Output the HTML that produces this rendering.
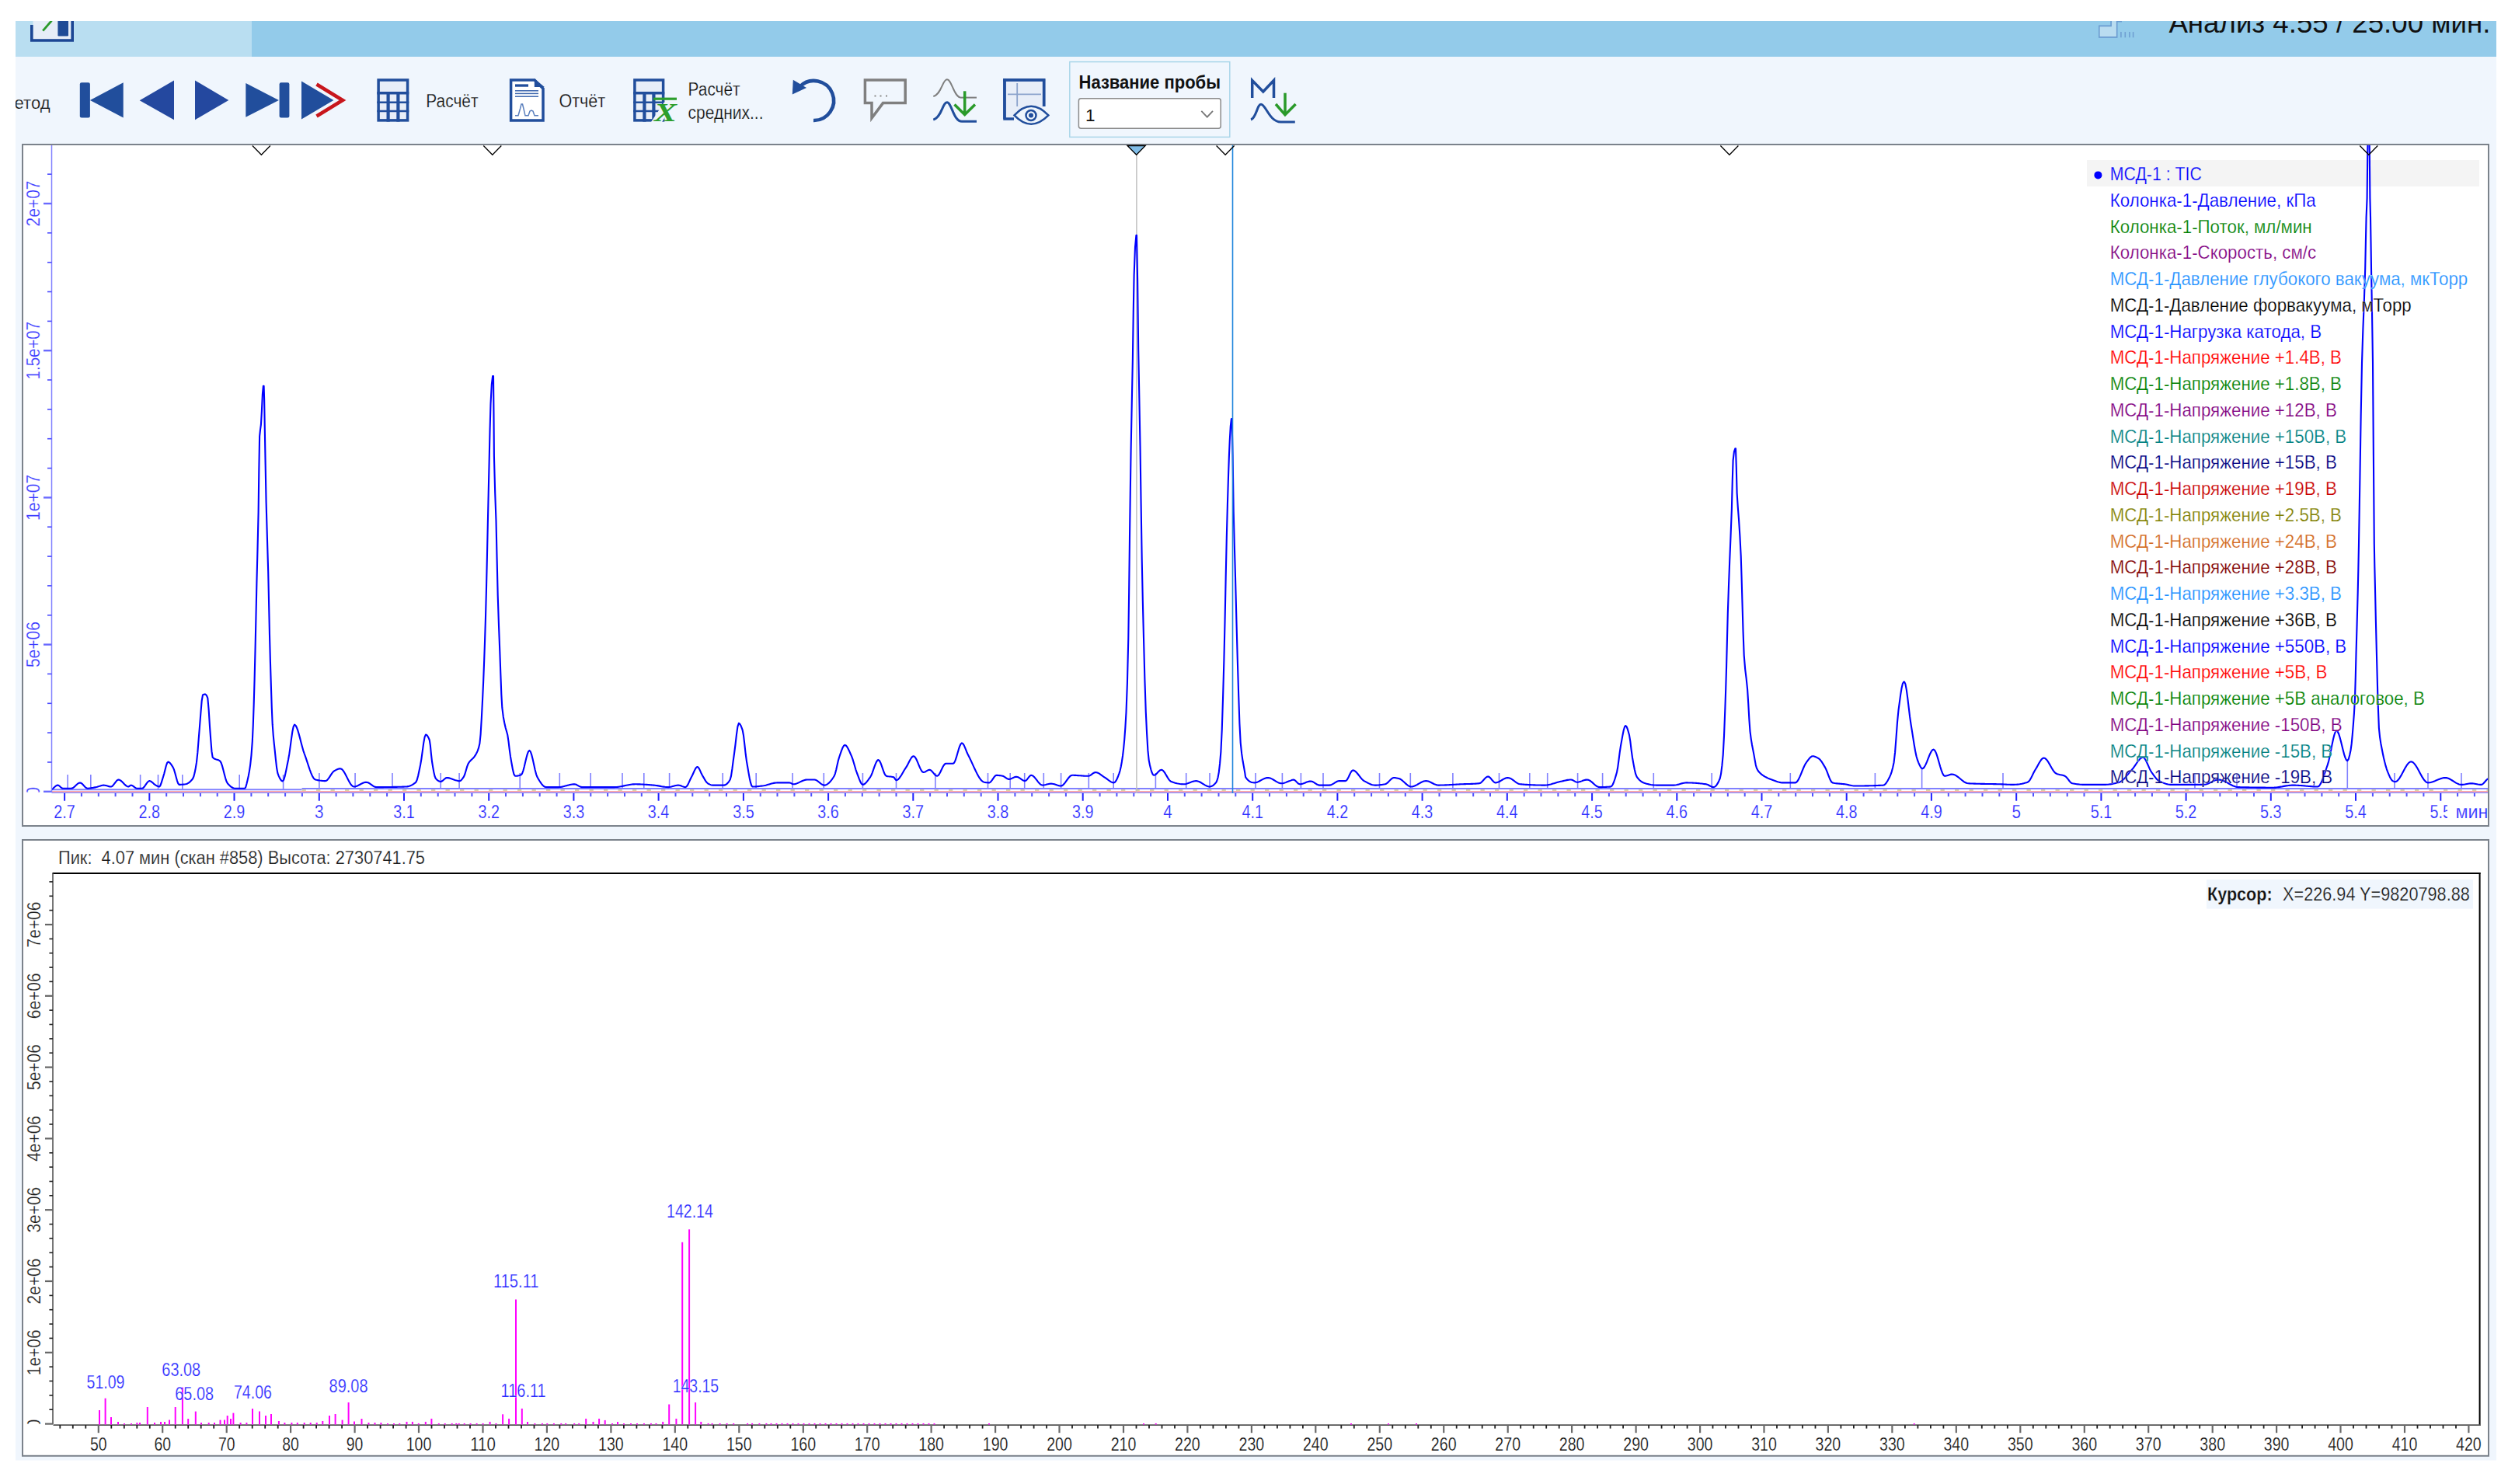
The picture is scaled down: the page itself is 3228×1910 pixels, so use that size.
<!DOCTYPE html><html><head><meta charset="utf-8"><style>html,body{margin:0;padding:0;background:#fff;overflow:hidden;width:3228px;height:1910px} svg{display:block} text{font-family:"Liberation Sans", sans-serif}</style></head><body>
<svg width="3228" height="1910" viewBox="0 0 3228 1910">
<defs><clipPath id="c1"><rect x="30" y="187" width="3172" height="875"/></clipPath><clipPath id="p1"><rect x="66" y="187" width="3136" height="834"/></clipPath><clipPath id="z1"><rect x="20" y="990" width="50" height="29.5"/></clipPath><clipPath id="z2"><rect x="20" y="1800" width="50" height="32.5"/></clipPath><clipPath id="tb"><rect x="20" y="27" width="3193" height="46"/></clipPath><clipPath id="tl"><rect x="20" y="73" width="200" height="113"/></clipPath></defs>
<rect x="0.0" y="0.0" width="3228.0" height="1910.0" fill="#ffffff"/>
<rect x="20.0" y="73.0" width="3193.0" height="1806.5" fill="#f0f6fd"/>
<rect x="20.0" y="27.0" width="3193.0" height="46.0" fill="#93cbea"/>
<rect x="20.0" y="27.0" width="304.0" height="46.0" fill="#b9def1"/>
<g clip-path="url(#tb)">
<rect x="42.5" y="20.0" width="49.0" height="30.5" fill="#e6edf7"/>
<path d="M40.8 32 V52 H93.2 V20" fill="none" stroke="#1c4694" stroke-width="3.6"/>
<path d="M74.4 20 H88 V45.3 Q88 46.5 86.8 46.5 H75.6 Q74.4 46.5 74.4 45.3 Z" fill="#1f4b96"/>
<line x1="55.2" y1="39.6" x2="66.5" y2="26.5" stroke="#2a9a2a" stroke-width="2.8"/>
<path d="M2701.8 33.4 H2717.1 V20 H2724.7 V47.9 H2701.8 Z" fill="#b9dcf0" stroke="#6a9bd0" stroke-width="1.6"/>
<line x1="2724.7" y1="27.6" x2="2731.0" y2="27.6" stroke="#6a9bd0" stroke-width="1.6"/>
<line x1="2729.9" y1="41.1" x2="2729.9" y2="48.3" stroke="#6f9fd2" stroke-width="1.6"/>
<line x1="2735.3" y1="41.1" x2="2735.3" y2="48.3" stroke="#6f9fd2" stroke-width="1.6"/>
<line x1="2740.9" y1="41.1" x2="2740.9" y2="48.3" stroke="#6f9fd2" stroke-width="1.6"/>
<line x1="2745.6" y1="41.1" x2="2745.6" y2="48.3" stroke="#6f9fd2" stroke-width="1.6"/>
<text x="2791.4" y="42.4" font-size="36.7" fill="#111" textLength="414.0" lengthAdjust="spacingAndGlyphs">Анализ 4.55 / 25.00 мин.</text>
</g>
<g clip-path="url(#tl)">
<text x="0.0" y="140.4" font-size="22" fill="#111" id="metod" stroke="#f0f6fd" stroke-width="0.25">Метод</text>
</g>
<rect x="102.8" y="106.3" width="13.1" height="45.1" rx="2.2" fill="#214e9c"/>
<path d="M115.9 129 L158.7 106.3 V151.4 Z" fill="#214e9c"/>
<path d="M179.7 129.3 L224 103.6 V154.2 Z" fill="#24489f"/>
<path d="M251 103.6 L294.3 129 L251 154.2 Z" fill="#24489f"/>
<path d="M316.3 106.9 L358.9 129 L316.3 150.7 Z" fill="#214e9c"/>
<rect x="359.6" y="106.3" width="12.8" height="45.1" rx="2.2" fill="#214e9c"/>
<path d="M388 104.4 L429.4 129 L388 153.4 Z" fill="#214e9c"/>
<path d="M407.5 108.5 L441 129 L407.5 149.5" fill="none" stroke="#c8161c" stroke-width="4.6"/>
<rect x="487.1" y="103.0" width="37.5" height="51.9" fill="#e8eef8" stroke="#214e9c" stroke-width="3.5"/>
<line x1="485.3" y1="119.8" x2="526.3" y2="119.8" stroke="#214e9c" stroke-width="3.5"/>
<line x1="485.3" y1="131.8" x2="526.3" y2="131.8" stroke="#214e9c" stroke-width="2.6"/>
<line x1="485.3" y1="143.0" x2="526.3" y2="143.0" stroke="#214e9c" stroke-width="2.6"/>
<line x1="499.6" y1="119.7" x2="499.6" y2="156.6" stroke="#214e9c" stroke-width="4.2"/>
<line x1="512.4" y1="119.7" x2="512.4" y2="156.6" stroke="#214e9c" stroke-width="4.2"/>
<text x="548.3" y="138.3" font-size="23" fill="#111" textLength="67.3" lengthAdjust="spacingAndGlyphs" stroke="#f0f6fd" stroke-width="0.25">Расчёт</text>
<path d="M657.6 103 H688 L699 114 V154.9 H657.6 Z" fill="#ffffff" stroke="#214e9c" stroke-width="3.5"/>
<path d="M687.8 101.2 V111.9 H700.8 Z" fill="#214e9c"/>
<rect x="663.0" y="108.4" width="17.0" height="3.3" fill="#214e9c"/>
<line x1="663.0" y1="116.8" x2="693.0" y2="116.8" stroke="#3d66ad" stroke-width="1.5"/>
<line x1="663.0" y1="120.4" x2="693.0" y2="120.4" stroke="#3d66ad" stroke-width="1.5"/>
<line x1="663.0" y1="124.2" x2="693.0" y2="124.2" stroke="#3d66ad" stroke-width="1.5"/>
<polyline points="663,148.8 667,148.8 669.5,140 671,134 672.5,134 674,140 676,148.8 680,148.8 682,143 684,142 686,143 688,148.8 693,148.8" fill="none" stroke="#5a7fbd" stroke-width="1.5"/>
<text x="719.4" y="138.3" font-size="23" fill="#111" textLength="59.8" lengthAdjust="spacingAndGlyphs" stroke="#f0f6fd" stroke-width="0.25">Отчёт</text>
<rect x="816.9" y="103.0" width="36.7" height="51.9" fill="#e8eef8" stroke="#214e9c" stroke-width="3.5"/>
<line x1="815.1" y1="119.8" x2="855.3" y2="119.8" stroke="#214e9c" stroke-width="3.5"/>
<line x1="815.1" y1="131.8" x2="855.3" y2="131.8" stroke="#214e9c" stroke-width="2.6"/>
<line x1="815.1" y1="143.0" x2="855.3" y2="143.0" stroke="#214e9c" stroke-width="2.6"/>
<line x1="829.4" y1="119.7" x2="829.4" y2="156.6" stroke="#214e9c" stroke-width="4.2"/>
<line x1="841.4" y1="119.7" x2="841.4" y2="156.6" stroke="#214e9c" stroke-width="4.2"/>
<path d="M838 157 L852 157 L868 131.5 L855 131.5 Z" fill="#eef5fc"/>
<rect x="841.0" y="125.6" width="30.0" height="3.2" fill="#2c9e2c"/>
<text x="856.5" y="156.2" font-size="33" style="font-family:'Liberation Serif';font-style:italic;font-weight:bold" fill="#2c9e2c" text-anchor="middle" textLength="29" lengthAdjust="spacingAndGlyphs">X</text>
<text x="885.6" y="123.1" font-size="23" fill="#111" textLength="67.0" lengthAdjust="spacingAndGlyphs" stroke="#f0f6fd" stroke-width="0.25">Расчёт</text>
<text x="885.6" y="152.5" font-size="23" fill="#111" textLength="96.9" lengthAdjust="spacingAndGlyphs" stroke="#f0f6fd" stroke-width="0.25">средних...</text>
<path d="M1029.5 111.5 A25.5 25.5 0 1 1 1047 155" fill="none" stroke="#214e9c" stroke-width="4.6"/>
<path d="M1020.8 102.8 L1019.8 121.4 L1038 113.1 Z" fill="#214e9c"/>
<path d="M1113.4 103 H1165.2 V132.6 H1136.5 L1122 152 V132.6 H1113.4 Z" fill="none" stroke="#7f7f7f" stroke-width="3.5" stroke-linejoin="miter"/>
<rect x="1125.5" y="122.5" width="2.0" height="2.0" fill="#8a8a8a"/>
<rect x="1132.5" y="122.5" width="2.0" height="2.0" fill="#8a8a8a"/>
<rect x="1140.0" y="122.5" width="2.0" height="2.0" fill="#8a8a8a"/>
<path d="M1201.3 124 C1212 121 1213 102.3 1218.9 102.3 C1225 102.3 1227 123 1236 125.6" fill="none" stroke="#7f7f7f" stroke-width="2"/>
<line x1="1236.0" y1="125.6" x2="1257.0" y2="125.6" stroke="#7f7f7f" stroke-width="2"/>
<path d="M1201.3 154.1 C1212 151 1213 131.8 1218.9 131.8 C1225 131.8 1227 156.2 1238 156.2 H1257" fill="none" stroke="#214e9c" stroke-width="3"/>
<line x1="1241.7" y1="117.3" x2="1241.7" y2="147.0" stroke="#2a9a2a" stroke-width="3.5"/>
<path d="M1228.5 134.5 L1241.7 147.5 L1255 134.5" fill="none" stroke="#2a9a2a" stroke-width="3.5"/>
<path d="M1293 153.1 V103 H1343.6 V137" fill="#e8eef8" stroke="#214e9c" stroke-width="3.5"/>
<rect x="1294.8" y="104.8" width="47.0" height="48.0" fill="#e8eef8"/>
<path d="M1293 101.3 V153.1 H1305" fill="none" stroke="#214e9c" stroke-width="3.5"/>
<path d="M1291.2 103 H1345.4 M1343.6 101.3 V137" fill="none" stroke="#214e9c" stroke-width="3.5"/>
<line x1="1297.0" y1="121.3" x2="1340.0" y2="121.3" stroke="#8ba3cc" stroke-width="1.8"/>
<line x1="1309.2" y1="107.0" x2="1309.2" y2="137.0" stroke="#8ba3cc" stroke-width="1.8"/>
<path d="M1305.5 148.4 Q1327 125 1349.4 148.4 Q1327 171 1305.5 148.4 Z" fill="#eef5fc" stroke="#214e9c" stroke-width="2.5"/>
<circle cx="1327" cy="148.4" r="6.5" fill="none" stroke="#214e9c" stroke-width="2.5"/>
<circle cx="1327" cy="148.4" r="3" fill="#214e9c"/>
<rect x="1376.8" y="79.6" width="206.0" height="96.8" fill="none" stroke="#a6d4e8" stroke-width="1.4"/>
<text x="1388.5" y="114.1" font-size="23" fill="#111" font-weight="bold" textLength="182.5" lengthAdjust="spacingAndGlyphs">Название пробы</text>
<rect x="1388.4" y="126.7" width="182.8" height="38.5" rx="3" fill="#ffffff" stroke="#8a8a8a" stroke-width="1.5"/>
<text x="1397.0" y="155.5" font-size="22.5" fill="#111">1</text>
<path d="M1546.3 142.8 L1553.7 150.6 L1561 142.8" fill="none" stroke="#777" stroke-width="1.8"/>
<path d="M1611.7 126 V103.5 L1625.8 118 L1639.5 103.5 V126" fill="none" stroke="#214e9c" stroke-width="3.5" stroke-linejoin="miter"/>
<path d="M1610 154 C1617 152 1618 134.3 1623 134.3 C1629 134.3 1634 157.1 1648.4 157.1 H1666.8" fill="none" stroke="#214e9c" stroke-width="3"/>
<line x1="1654.0" y1="119.7" x2="1654.0" y2="147.5" stroke="#2a9a2a" stroke-width="3.5"/>
<path d="M1642 134 L1654 147.8 L1667.6 134" fill="none" stroke="#2a9a2a" stroke-width="3.5"/>
<rect x="29.0" y="186.0" width="3174.0" height="877.0" fill="#ffffff" stroke="#7b828b" stroke-width="2"/>
<rect x="2686.0" y="206.0" width="505.0" height="34.0" fill="#f4f4f4"/>
<g clip-path="url(#p1)">
<line x1="66.5" y1="1016.2" x2="388.5" y2="1016.2" stroke="#8080ff" stroke-width="2"/>
<line x1="388.5" y1="1014.9" x2="3202.0" y2="1014.9" stroke="#8080ff" stroke-width="2"/>
<line x1="388.5" y1="1017.0" x2="3202" y2="1017.0" stroke="#d9d4a8" stroke-width="2" stroke-dasharray="5.3 13.2"/>
<line x1="66.5" y1="1018.9" x2="3202.0" y2="1018.9" stroke="#ffa4a4" stroke-width="1.6"/>
<line x1="66.5" y1="1020.8" x2="3202.0" y2="1020.8" stroke="#8080ff" stroke-width="2"/>
</g>
<g clip-path="url(#p1)">
<line x1="87.1" y1="997.0" x2="87.1" y2="1016.0" stroke="#8080ff" stroke-width="1.6"/>
<line x1="116.8" y1="997.0" x2="116.8" y2="1016.0" stroke="#8080ff" stroke-width="1.6"/>
<line x1="180.6" y1="997.0" x2="180.6" y2="1016.0" stroke="#8080ff" stroke-width="1.6"/>
<line x1="203.5" y1="997.0" x2="203.5" y2="1016.0" stroke="#8080ff" stroke-width="1.6"/>
<line x1="234.8" y1="997.0" x2="234.8" y2="1016.0" stroke="#8080ff" stroke-width="1.6"/>
<line x1="308.2" y1="997.0" x2="308.2" y2="1016.0" stroke="#8080ff" stroke-width="1.6"/>
<line x1="364.6" y1="997.0" x2="364.6" y2="1016.0" stroke="#8080ff" stroke-width="1.6"/>
<line x1="410.9" y1="995.0" x2="410.9" y2="1014.0" stroke="#8080ff" stroke-width="1.6"/>
<line x1="457.1" y1="995.0" x2="457.1" y2="1014.0" stroke="#8080ff" stroke-width="1.6"/>
<line x1="505.0" y1="995.0" x2="505.0" y2="1014.0" stroke="#8080ff" stroke-width="1.6"/>
<line x1="567.2" y1="995.0" x2="567.2" y2="1014.0" stroke="#8080ff" stroke-width="1.6"/>
<line x1="591.1" y1="995.0" x2="591.1" y2="1014.0" stroke="#8080ff" stroke-width="1.6"/>
<line x1="669.2" y1="995.0" x2="669.2" y2="1014.0" stroke="#8080ff" stroke-width="1.6"/>
<line x1="720.3" y1="995.0" x2="720.3" y2="1014.0" stroke="#8080ff" stroke-width="1.6"/>
<line x1="760.2" y1="995.0" x2="760.2" y2="1014.0" stroke="#8080ff" stroke-width="1.6"/>
<line x1="801.0" y1="995.0" x2="801.0" y2="1014.0" stroke="#8080ff" stroke-width="1.6"/>
<line x1="828.8" y1="995.0" x2="828.8" y2="1014.0" stroke="#8080ff" stroke-width="1.6"/>
<line x1="861.6" y1="995.0" x2="861.6" y2="1014.0" stroke="#8080ff" stroke-width="1.6"/>
<line x1="930.2" y1="995.0" x2="930.2" y2="1014.0" stroke="#8080ff" stroke-width="1.6"/>
<line x1="973.2" y1="995.0" x2="973.2" y2="1014.0" stroke="#8080ff" stroke-width="1.6"/>
<line x1="1020.1" y1="995.0" x2="1020.1" y2="1014.0" stroke="#8080ff" stroke-width="1.6"/>
<line x1="1060.3" y1="995.0" x2="1060.3" y2="1014.0" stroke="#8080ff" stroke-width="1.6"/>
<line x1="1110.4" y1="995.0" x2="1110.4" y2="1014.0" stroke="#8080ff" stroke-width="1.6"/>
<line x1="1153.5" y1="995.0" x2="1153.5" y2="1014.0" stroke="#8080ff" stroke-width="1.6"/>
<line x1="1203.9" y1="995.0" x2="1203.9" y2="1014.0" stroke="#8080ff" stroke-width="1.6"/>
<line x1="1271.5" y1="995.0" x2="1271.5" y2="1014.0" stroke="#8080ff" stroke-width="1.6"/>
<line x1="1300.2" y1="995.0" x2="1300.2" y2="1014.0" stroke="#8080ff" stroke-width="1.6"/>
<line x1="1318.7" y1="995.0" x2="1318.7" y2="1014.0" stroke="#8080ff" stroke-width="1.6"/>
<line x1="1343.3" y1="995.0" x2="1343.3" y2="1014.0" stroke="#8080ff" stroke-width="1.6"/>
<line x1="1365.6" y1="995.0" x2="1365.6" y2="1014.0" stroke="#8080ff" stroke-width="1.6"/>
<line x1="1401.3" y1="995.0" x2="1401.3" y2="1014.0" stroke="#8080ff" stroke-width="1.6"/>
<line x1="1433.2" y1="995.0" x2="1433.2" y2="1014.0" stroke="#8080ff" stroke-width="1.6"/>
<line x1="1487.4" y1="995.0" x2="1487.4" y2="1014.0" stroke="#8080ff" stroke-width="1.6"/>
<line x1="1526.7" y1="995.0" x2="1526.7" y2="1014.0" stroke="#8080ff" stroke-width="1.6"/>
<line x1="1557.0" y1="995.0" x2="1557.0" y2="1014.0" stroke="#8080ff" stroke-width="1.6"/>
<line x1="1616.0" y1="995.0" x2="1616.0" y2="1014.0" stroke="#8080ff" stroke-width="1.6"/>
<line x1="1650.4" y1="995.0" x2="1650.4" y2="1014.0" stroke="#8080ff" stroke-width="1.6"/>
<line x1="1674.4" y1="995.0" x2="1674.4" y2="1014.0" stroke="#8080ff" stroke-width="1.6"/>
<line x1="1703.0" y1="995.0" x2="1703.0" y2="1014.0" stroke="#8080ff" stroke-width="1.6"/>
<line x1="1775.5" y1="995.0" x2="1775.5" y2="1014.0" stroke="#8080ff" stroke-width="1.6"/>
<line x1="1815.3" y1="995.0" x2="1815.3" y2="1014.0" stroke="#8080ff" stroke-width="1.6"/>
<line x1="1869.9" y1="995.0" x2="1869.9" y2="1014.0" stroke="#8080ff" stroke-width="1.6"/>
<line x1="1929.5" y1="995.0" x2="1929.5" y2="1014.0" stroke="#8080ff" stroke-width="1.6"/>
<line x1="1968.8" y1="995.0" x2="1968.8" y2="1014.0" stroke="#8080ff" stroke-width="1.6"/>
<line x1="1991.7" y1="995.0" x2="1991.7" y2="1014.0" stroke="#8080ff" stroke-width="1.6"/>
<line x1="2030.6" y1="995.0" x2="2030.6" y2="1014.0" stroke="#8080ff" stroke-width="1.6"/>
<line x1="2062.6" y1="995.0" x2="2062.6" y2="1014.0" stroke="#8080ff" stroke-width="1.6"/>
<line x1="2128.3" y1="995.0" x2="2128.3" y2="1014.0" stroke="#8080ff" stroke-width="1.6"/>
<line x1="2203.2" y1="995.0" x2="2203.2" y2="1014.0" stroke="#8080ff" stroke-width="1.6"/>
<line x1="2304.3" y1="995.0" x2="2304.3" y2="1014.0" stroke="#8080ff" stroke-width="1.6"/>
<line x1="2413.4" y1="995.0" x2="2413.4" y2="1014.0" stroke="#8080ff" stroke-width="1.6"/>
<line x1="2473.6" y1="988.0" x2="2473.6" y2="1014.0" stroke="#8080ff" stroke-width="1.6"/>
<line x1="2578.0" y1="995.0" x2="2578.0" y2="1014.0" stroke="#8080ff" stroke-width="1.6"/>
<line x1="2825.0" y1="995.0" x2="2825.0" y2="1014.0" stroke="#8080ff" stroke-width="1.6"/>
<line x1="2879.0" y1="995.0" x2="2879.0" y2="1014.0" stroke="#8080ff" stroke-width="1.6"/>
<line x1="3021.3" y1="979.2" x2="3021.3" y2="1014.0" stroke="#8080ff" stroke-width="1.6"/>
<line x1="3082.0" y1="995.0" x2="3082.0" y2="1014.0" stroke="#8080ff" stroke-width="1.6"/>
<line x1="3125.0" y1="995.0" x2="3125.0" y2="1014.0" stroke="#8080ff" stroke-width="1.6"/>
<line x1="3168.0" y1="995.0" x2="3168.0" y2="1014.0" stroke="#8080ff" stroke-width="1.6"/>
<line x1="1462.9" y1="199.0" x2="1462.9" y2="1021.0" stroke="#c0c0c0" stroke-width="1.5"/>
<polyline points="66.50,1016.30 67.82,1015.22 69.13,1013.98 70.45,1012.74 71.77,1011.66 73.08,1010.89 74.40,1010.60 75.66,1011.03 76.92,1012.04 78.18,1013.26 79.44,1014.27 80.70,1014.70 82.10,1014.70 83.50,1014.70 84.90,1014.70 86.30,1014.70 87.70,1014.70 89.10,1014.70 90.50,1014.70 91.90,1014.70 93.29,1014.39 94.68,1013.56 96.06,1012.39 97.45,1011.05 98.84,1009.71 100.22,1008.54 101.61,1007.71 103.00,1007.40 104.37,1007.80 105.74,1008.85 107.11,1010.27 108.49,1011.83 109.86,1013.25 111.23,1014.30 112.60,1014.70 114.00,1014.66 115.40,1014.55 116.80,1014.38 118.20,1014.16 119.60,1013.91 121.00,1013.64 122.40,1013.37 123.80,1013.10 125.17,1012.77 126.54,1012.34 127.91,1011.87 129.29,1011.40 130.66,1010.99 132.03,1010.71 133.40,1010.60 134.76,1010.71 136.11,1010.98 137.47,1011.35 138.83,1011.75 140.19,1012.12 141.54,1012.39 142.90,1012.50 144.27,1012.00 145.64,1010.72 147.01,1008.96 148.39,1007.04 149.76,1005.28 151.13,1004.00 152.50,1003.50 153.92,1003.81 155.34,1004.64 156.77,1005.83 158.19,1007.25 159.61,1008.75 161.03,1010.17 162.46,1011.36 163.88,1012.19 165.30,1012.50 166.37,1012.01 167.43,1011.09 168.50,1010.60 169.82,1010.90 171.13,1011.66 172.45,1012.65 173.77,1013.64 175.08,1014.40 176.40,1014.70 177.68,1014.70 178.96,1014.70 180.24,1014.70 181.52,1014.70 182.80,1014.70 184.17,1014.17 185.54,1012.80 186.91,1010.92 188.29,1008.88 189.66,1007.00 191.03,1005.63 192.40,1005.10 193.73,1005.42 195.07,1006.23 196.40,1007.35 197.73,1008.58 199.07,1009.73 200.40,1010.60 201.57,1011.23 202.75,1011.84 203.93,1012.31 205.10,1012.50 206.32,1011.19 207.55,1007.95 208.78,1003.87 210.00,1000.00 211.26,995.74 212.52,990.65 213.78,985.75 215.04,982.06 216.30,980.60 217.58,981.01 218.86,982.11 220.14,983.71 221.42,985.61 222.70,987.60 224.03,990.68 225.37,995.21 226.70,1000.30 228.03,1005.03 229.37,1008.53 230.70,1009.90 232.02,1009.88 233.33,1009.82 234.65,1009.73 235.97,1009.61 237.28,1009.47 238.60,1009.30 239.97,1009.00 241.34,1008.45 242.71,1007.66 244.09,1006.62 245.46,1005.34 246.83,1003.80 248.20,1002.00 249.40,999.24 250.60,994.59 251.80,988.45 253.00,981.20 254.33,968.64 255.67,951.49 257.00,935.00 258.33,918.24 259.67,902.06 261.00,894.40 262.00,893.92 263.00,893.61 264.00,893.50 265.10,894.08 266.20,895.74 267.30,898.30 268.65,913.48 270.00,935.00 271.23,951.64 272.47,967.19 273.70,974.80 275.07,976.03 276.44,976.82 277.81,977.31 279.19,977.67 280.56,978.07 281.93,978.66 283.30,979.60 284.67,981.87 286.04,985.87 287.41,990.94 288.79,996.39 290.16,1001.55 291.53,1005.75 292.90,1008.30 294.26,1009.75 295.61,1011.09 296.97,1012.28 298.33,1013.28 299.69,1014.04 301.04,1014.53 302.40,1014.70 303.82,1014.70 305.24,1014.70 306.67,1014.70 308.09,1014.70 309.51,1014.70 310.93,1014.70 312.36,1014.70 313.78,1014.70 315.20,1014.70 316.30,1013.00 317.40,1009.01 318.50,1004.40 319.73,999.04 320.97,992.43 322.20,984.10 323.50,972.01 324.80,954.40 325.75,933.77 326.70,906.30 327.60,874.50 328.50,837.70 329.45,794.60 330.40,750.60 331.50,707.37 332.60,659.80 333.35,603.82 334.10,561.50 335.00,553.14 335.90,546.70 336.90,528.98 337.90,507.28 338.90,496.70 339.25,496.70 339.60,496.70 340.15,515.03 340.70,546.70 341.65,598.31 342.60,646.80 343.90,692.10 345.20,735.70 346.10,776.43 347.00,817.30 347.95,852.85 348.90,884.00 349.80,911.26 350.70,932.20 351.70,946.02 352.70,956.40 353.70,965.60 354.93,977.63 356.17,988.54 357.40,995.20 358.68,998.58 359.96,1001.39 361.24,1003.55 362.52,1004.92 363.80,1005.40 365.24,1003.60 366.68,998.89 368.12,992.35 369.56,985.03 371.00,978.00 372.33,970.44 373.67,960.88 375.00,950.81 376.33,941.76 377.67,935.22 379.00,932.70 380.41,933.62 381.82,936.13 383.23,939.91 384.64,944.61 386.06,949.89 387.47,955.41 388.88,960.83 390.29,965.81 391.70,970.00 393.13,973.93 394.56,978.16 395.99,982.52 397.42,986.85 398.85,991.00 400.28,994.82 401.71,998.13 403.14,1000.79 404.57,1002.63 406.00,1003.50 407.43,1003.82 408.87,1004.10 410.30,1004.36 411.73,1004.58 413.17,1004.76 414.60,1004.91 416.03,1005.01 417.47,1005.08 418.90,1005.10 420.29,1004.64 421.67,1003.42 423.06,1001.65 424.45,999.55 425.84,997.36 427.23,995.29 428.61,993.56 430.00,992.40 431.33,991.63 432.67,990.89 434.00,990.22 435.33,989.69 436.67,989.33 438.00,989.20 439.46,989.66 440.92,990.93 442.38,992.84 443.83,995.24 445.29,997.96 446.75,1000.85 448.21,1003.74 449.67,1006.46 451.12,1008.86 452.58,1010.77 454.04,1012.04 455.50,1012.50 456.95,1012.36 458.41,1011.99 459.86,1011.44 461.32,1010.76 462.77,1009.99 464.23,1009.21 465.68,1008.44 467.14,1007.76 468.59,1007.21 470.05,1006.84 471.50,1006.70 472.91,1006.92 474.32,1007.51 475.73,1008.36 477.14,1009.37 478.56,1010.43 479.97,1011.44 481.38,1012.29 482.79,1012.88 484.20,1013.10 485.67,1013.10 487.15,1013.10 488.62,1013.09 490.09,1013.09 491.57,1013.08 493.04,1013.08 494.51,1013.07 495.98,1013.05 497.46,1013.04 498.93,1013.03 500.40,1013.01 501.88,1012.99 503.35,1012.97 504.82,1012.95 506.30,1012.92 507.77,1012.90 509.24,1012.87 510.72,1012.84 512.19,1012.80 513.66,1012.77 515.13,1012.73 516.61,1012.69 518.08,1012.65 519.55,1012.60 521.03,1012.55 522.50,1012.50 523.92,1012.39 525.34,1012.15 526.77,1011.78 528.19,1011.28 529.61,1010.65 531.03,1009.88 532.46,1008.96 533.88,1007.91 535.30,1006.70 536.72,1003.79 538.15,998.43 539.58,991.77 541.00,985.00 542.40,976.85 543.80,966.54 545.20,956.37 546.60,948.60 548.00,945.50 549.20,946.00 550.40,947.43 551.60,949.64 552.80,952.50 553.87,959.42 554.93,970.60 556.00,980.00 557.20,987.30 558.40,993.98 559.60,999.17 560.80,1002.00 562.08,1003.35 563.36,1004.46 564.64,1005.29 565.92,1005.82 567.20,1006.00 568.53,1005.63 569.87,1004.70 571.20,1003.50 572.53,1002.30 573.87,1001.37 575.20,1001.00 576.59,1001.10 577.98,1001.38 579.36,1001.79 580.75,1002.29 582.14,1002.82 583.52,1003.35 584.91,1003.82 586.30,1004.20 587.60,1004.52 588.90,1004.85 590.20,1005.10 591.50,1005.20 592.88,1004.72 594.25,1003.44 595.62,1001.65 597.00,999.60 598.40,996.28 599.80,991.48 601.20,986.59 602.60,983.00 603.93,980.94 605.26,979.34 606.59,978.01 607.91,976.78 609.24,975.47 610.57,973.90 611.90,971.90 613.27,969.49 614.65,966.60 616.02,962.63 617.40,957.00 618.63,944.78 619.87,923.79 621.10,899.60 622.10,877.91 623.10,852.28 624.10,823.70 625.00,794.44 625.90,760.90 626.85,719.52 627.80,675.60 628.70,635.23 629.60,596.00 630.55,553.02 631.50,520.00 632.80,495.21 634.10,484.10 634.55,484.10 635.00,484.10 635.45,529.21 635.90,586.70 637.20,634.16 638.50,670.00 639.60,718.97 640.70,766.30 642.00,805.12 643.30,838.50 644.30,866.51 645.30,893.34 646.30,910.70 647.77,922.44 649.23,930.31 650.70,936.70 652.00,941.28 653.30,946.10 654.53,954.36 655.77,964.82 657.00,973.70 658.48,982.21 659.95,990.33 661.42,996.41 662.90,998.80 664.22,998.75 665.53,998.60 666.85,998.36 668.17,998.04 669.48,997.65 670.80,997.20 672.12,995.49 673.45,991.77 674.77,986.73 676.10,981.07 677.42,975.46 678.75,970.61 680.07,967.19 681.40,965.90 682.86,967.50 684.31,971.70 685.77,977.60 687.23,984.30 688.69,990.92 690.14,996.55 691.60,1000.30 693.00,1002.69 694.40,1005.01 695.80,1007.17 697.20,1009.11 698.60,1010.74 700.00,1012.00 701.40,1012.81 702.80,1013.10 704.25,1013.10 705.69,1013.10 707.14,1013.10 708.58,1013.10 710.03,1013.10 711.47,1013.10 712.92,1013.10 714.36,1013.10 715.81,1013.10 717.25,1013.10 718.70,1013.10 720.18,1013.04 721.66,1012.89 723.14,1012.65 724.61,1012.35 726.09,1011.99 727.57,1011.60 729.05,1011.20 730.53,1010.80 732.01,1010.41 733.49,1010.05 734.96,1009.75 736.44,1009.51 737.92,1009.36 739.40,1009.30 740.77,1009.51 742.14,1010.05 743.51,1010.80 744.89,1011.60 746.26,1012.35 747.63,1012.89 749.00,1013.10 750.48,1013.10 751.96,1013.10 753.45,1013.10 754.93,1013.10 756.41,1013.10 757.89,1013.10 759.38,1013.10 760.86,1013.10 762.34,1013.10 763.82,1013.10 765.30,1013.10 766.79,1013.10 768.27,1013.10 769.75,1013.10 771.23,1013.10 772.71,1013.10 774.20,1013.10 775.68,1013.10 777.16,1013.10 778.64,1013.10 780.12,1013.10 781.61,1013.10 783.09,1013.10 784.57,1013.10 786.05,1013.10 787.54,1013.10 789.02,1013.10 790.50,1013.10 791.93,1013.07 793.35,1012.98 794.78,1012.85 796.21,1012.67 797.63,1012.45 799.06,1012.20 800.48,1011.93 801.91,1011.65 803.34,1011.35 804.76,1011.05 806.19,1010.75 807.62,1010.47 809.04,1010.20 810.47,1009.95 811.89,1009.73 813.32,1009.55 814.75,1009.42 816.17,1009.33 817.60,1009.30 819.09,1009.31 820.59,1009.33 822.08,1009.37 823.58,1009.41 825.07,1009.47 826.56,1009.55 828.06,1009.63 829.55,1009.71 831.04,1009.81 832.54,1009.91 834.03,1010.02 835.52,1010.13 837.02,1010.25 838.51,1010.36 840.01,1010.48 841.50,1010.60 842.92,1010.74 844.35,1010.92 845.77,1011.14 847.19,1011.38 848.62,1011.64 850.04,1011.90 851.46,1012.16 852.88,1012.41 854.31,1012.63 855.73,1012.82 857.15,1012.97 858.58,1013.07 860.00,1013.10 861.42,1013.01 862.84,1012.78 864.27,1012.45 865.69,1012.06 867.11,1011.64 868.53,1011.25 869.96,1010.92 871.38,1010.69 872.80,1010.60 874.16,1010.74 875.51,1011.10 876.87,1011.58 878.23,1012.12 879.59,1012.60 880.94,1012.96 882.30,1013.10 883.58,1012.43 884.87,1010.68 886.15,1008.19 887.43,1005.34 888.72,1002.49 890.00,1000.00 891.27,997.54 892.53,994.71 893.80,991.88 895.07,989.41 896.33,987.66 897.60,987.00 898.88,987.82 900.16,989.90 901.44,992.67 902.72,995.56 904.00,998.00 905.40,1000.37 906.80,1002.84 908.20,1005.16 909.60,1007.07 911.00,1008.30 912.28,1009.01 913.56,1009.64 914.84,1010.14 916.12,1010.48 917.40,1010.60 918.84,1010.60 920.28,1010.60 921.72,1010.60 923.16,1010.60 924.60,1010.60 926.04,1010.60 927.48,1010.60 928.92,1010.60 930.36,1010.60 931.80,1010.60 933.12,1010.38 934.43,1009.73 935.75,1008.68 937.07,1007.28 938.38,1005.54 939.70,1003.50 941.03,998.64 942.35,989.94 943.67,979.65 945.00,970.00 946.48,958.50 947.95,945.62 949.42,935.13 950.90,930.80 952.10,931.53 953.30,933.48 954.50,936.32 955.70,939.70 957.03,946.80 958.35,958.09 959.67,970.26 961.00,980.00 962.25,987.28 963.50,994.66 964.75,1001.51 966.00,1007.19 967.25,1011.07 968.50,1012.50 969.91,1012.48 971.32,1012.43 972.73,1012.35 974.14,1012.24 975.56,1012.11 976.97,1011.97 978.38,1011.82 979.79,1011.66 981.20,1011.50 982.67,1011.29 984.14,1011.00 985.61,1010.65 987.08,1010.26 988.55,1009.84 990.02,1009.40 991.48,1008.97 992.95,1008.56 994.42,1008.19 995.89,1007.87 997.36,1007.62 998.83,1007.46 1000.30,1007.40 1001.75,1007.40 1003.21,1007.40 1004.66,1007.40 1006.12,1007.40 1007.57,1007.40 1009.03,1007.40 1010.48,1007.40 1011.94,1007.40 1013.39,1007.40 1014.85,1007.40 1016.30,1007.40 1017.50,1007.70 1018.70,1008.35 1019.90,1009.00 1021.10,1009.30 1022.56,1009.19 1024.02,1008.87 1025.47,1008.39 1026.93,1007.80 1028.39,1007.12 1029.85,1006.40 1031.31,1005.68 1032.77,1005.00 1034.22,1004.41 1035.68,1003.93 1037.14,1003.61 1038.60,1003.50 1039.97,1003.50 1041.34,1003.50 1042.71,1003.50 1044.09,1003.50 1045.46,1003.50 1046.83,1003.50 1048.20,1003.50 1049.62,1003.74 1051.04,1004.40 1052.47,1005.34 1053.89,1006.46 1055.31,1007.64 1056.73,1008.76 1058.16,1009.70 1059.58,1010.36 1061.00,1010.60 1062.41,1010.42 1063.82,1009.89 1065.23,1009.05 1066.64,1007.91 1068.06,1006.51 1069.47,1004.87 1070.88,1003.02 1072.29,1000.99 1073.70,998.80 1074.96,995.60 1076.22,990.65 1077.48,984.93 1078.74,979.40 1080.00,975.00 1081.48,970.69 1082.96,966.37 1084.44,962.59 1085.92,959.92 1087.40,958.90 1088.83,959.52 1090.27,961.21 1091.70,963.69 1093.13,966.70 1094.57,969.96 1096.00,973.20 1097.40,976.88 1098.80,981.44 1100.20,986.33 1101.60,991.03 1103.00,995.00 1104.48,998.87 1105.96,1002.86 1107.44,1006.40 1108.92,1008.93 1110.40,1009.90 1111.77,1009.60 1113.14,1008.75 1114.51,1007.48 1115.89,1005.90 1117.26,1004.10 1118.63,1002.19 1120.00,1000.30 1121.31,997.98 1122.62,994.82 1123.94,991.16 1125.25,987.37 1126.56,983.81 1127.88,980.82 1129.19,978.76 1130.50,978.00 1131.96,979.10 1133.41,981.95 1134.87,985.88 1136.33,990.20 1137.79,994.25 1139.24,997.34 1140.70,998.80 1142.07,999.12 1143.44,999.32 1144.81,999.46 1146.19,999.57 1147.56,999.72 1148.93,999.94 1150.30,1000.30 1151.37,1001.46 1152.43,1003.26 1153.50,1004.20 1154.91,1003.83 1156.32,1002.79 1157.73,1001.21 1159.14,999.23 1160.56,996.96 1161.97,994.54 1163.38,992.09 1164.79,989.73 1166.20,987.60 1167.57,985.39 1168.94,982.78 1170.31,980.05 1171.69,977.46 1173.06,975.27 1174.43,973.76 1175.80,973.20 1177.21,973.91 1178.62,975.82 1180.03,978.59 1181.44,981.87 1182.86,985.33 1184.27,988.61 1185.68,991.38 1187.09,993.29 1188.50,994.00 1189.83,993.76 1191.17,993.17 1192.50,992.40 1193.83,991.63 1195.17,991.04 1196.50,990.80 1197.87,991.24 1199.24,992.39 1200.61,993.95 1201.99,995.65 1203.36,997.21 1204.73,998.36 1206.10,998.80 1207.50,998.11 1208.90,996.30 1210.30,993.74 1211.70,990.80 1213.10,987.86 1214.50,985.30 1215.90,983.49 1217.30,982.80 1218.66,982.80 1220.01,982.80 1221.37,982.80 1222.73,982.80 1224.09,982.80 1225.44,982.80 1226.80,982.80 1228.20,981.66 1229.60,978.66 1231.00,974.42 1232.40,969.55 1233.80,964.68 1235.20,960.44 1236.60,957.44 1238.00,956.30 1239.33,957.10 1240.67,959.19 1242.00,962.14 1243.33,965.48 1244.67,968.79 1246.00,971.60 1247.48,974.41 1248.96,977.42 1250.44,980.58 1251.91,983.82 1253.39,987.07 1254.87,990.28 1256.35,993.38 1257.83,996.31 1259.31,999.00 1260.79,1001.39 1262.26,1003.42 1263.74,1005.03 1265.22,1006.14 1266.70,1006.70 1267.98,1006.92 1269.26,1007.11 1270.54,1007.26 1271.82,1007.36 1273.10,1007.40 1274.46,1006.87 1275.81,1005.50 1277.17,1003.62 1278.53,1001.58 1279.89,999.70 1281.24,998.33 1282.60,997.80 1283.93,997.84 1285.27,997.94 1286.60,998.10 1287.93,998.30 1289.27,998.54 1290.60,998.80 1291.93,999.29 1293.27,1000.10 1294.60,1001.05 1295.93,1001.96 1297.27,1002.63 1298.60,1002.90 1299.97,1002.72 1301.34,1002.27 1302.71,1001.64 1304.09,1000.96 1305.46,1000.33 1306.83,999.88 1308.20,999.70 1309.59,999.93 1310.97,1000.54 1312.36,1001.41 1313.75,1002.40 1315.14,1003.39 1316.53,1004.26 1317.91,1004.87 1319.30,1005.10 1320.63,1004.56 1321.97,1003.21 1323.30,1001.45 1324.63,999.69 1325.97,998.34 1327.30,997.80 1328.74,998.16 1330.18,999.13 1331.62,1000.56 1333.06,1002.31 1334.50,1004.20 1335.94,1006.09 1337.38,1007.84 1338.82,1009.27 1340.26,1010.24 1341.70,1010.60 1343.09,1010.51 1344.47,1010.29 1345.86,1009.97 1347.25,1009.60 1348.64,1009.23 1350.03,1008.91 1351.41,1008.69 1352.80,1008.60 1354.22,1008.70 1355.64,1008.97 1357.07,1009.35 1358.49,1009.81 1359.91,1010.29 1361.33,1010.75 1362.76,1011.13 1364.18,1011.40 1365.60,1011.50 1367.04,1011.12 1368.48,1010.08 1369.92,1008.54 1371.36,1006.68 1372.80,1004.65 1374.24,1002.62 1375.68,1000.76 1377.12,999.22 1378.56,998.18 1380.00,997.80 1381.48,997.81 1382.96,997.86 1384.44,997.92 1385.91,998.00 1387.39,998.09 1388.87,998.19 1390.35,998.30 1391.83,998.41 1393.31,998.51 1394.79,998.60 1396.26,998.68 1397.74,998.74 1399.22,998.79 1400.70,998.80 1402.06,998.53 1403.41,997.85 1404.77,996.91 1406.13,995.89 1407.49,994.95 1408.84,994.27 1410.20,994.00 1411.60,994.18 1413.00,994.69 1414.40,995.43 1415.80,996.35 1417.20,997.37 1418.60,998.42 1420.00,999.42 1421.40,1000.30 1422.77,1001.16 1424.13,1002.14 1425.50,1003.18 1426.87,1004.22 1428.23,1005.21 1429.60,1006.08 1430.97,1006.77 1432.33,1007.23 1433.70,1007.40 1435.06,1006.74 1436.42,1004.93 1437.78,1002.26 1439.14,998.99 1440.50,995.40 1441.62,991.70 1442.75,986.69 1443.88,980.44 1445.00,973.00 1446.12,963.70 1447.25,951.53 1448.38,936.01 1449.50,916.70 1450.90,879.31 1452.30,821.20 1453.15,761.74 1454.00,691.90 1454.80,633.08 1455.60,579.50 1456.75,519.56 1457.90,461.40 1458.75,402.28 1459.60,354.60 1461.00,318.30 1462.40,302.90 1462.70,302.90 1463.00,302.90 1464.10,360.14 1465.20,450.20 1466.35,512.06 1467.50,573.80 1468.60,648.67 1469.70,720.00 1470.85,774.75 1472.00,821.20 1473.40,874.72 1474.80,916.70 1476.10,943.99 1477.40,965.89 1478.70,978.60 1480.00,984.99 1481.30,990.30 1482.60,994.34 1483.90,996.90 1485.20,997.80 1486.57,997.41 1487.94,996.41 1489.31,995.04 1490.69,993.56 1492.06,992.19 1493.43,991.19 1494.80,990.80 1496.21,991.28 1497.62,992.56 1499.03,994.43 1500.44,996.69 1501.86,999.11 1503.27,1001.47 1504.68,1003.57 1506.09,1005.18 1507.50,1006.10 1508.95,1006.60 1510.41,1007.07 1511.86,1007.50 1513.32,1007.89 1514.77,1008.25 1516.23,1008.55 1517.68,1008.81 1519.14,1009.02 1520.59,1009.17 1522.05,1009.27 1523.50,1009.30 1524.95,1009.20 1526.39,1008.93 1527.84,1008.53 1529.28,1008.04 1530.73,1007.49 1532.17,1006.91 1533.62,1006.36 1535.06,1005.87 1536.51,1005.47 1537.95,1005.20 1539.40,1005.10 1540.87,1005.25 1542.33,1005.65 1543.80,1006.26 1545.27,1007.02 1546.73,1007.88 1548.20,1008.80 1549.67,1009.72 1551.13,1010.58 1552.60,1011.34 1554.07,1011.95 1555.53,1012.35 1557.00,1012.50 1558.33,1012.33 1559.67,1011.85 1561.00,1011.09 1562.33,1010.07 1563.67,1008.83 1565.00,1007.40 1566.25,1005.03 1567.50,1001.00 1568.80,993.92 1570.10,982.64 1571.40,967.30 1572.73,939.55 1574.07,897.42 1575.40,849.30 1576.53,800.30 1577.67,743.72 1578.80,691.90 1579.90,649.87 1581.00,613.20 1581.85,588.09 1582.70,568.20 1583.80,548.67 1584.90,539.00 1585.20,539.00 1585.50,539.00 1586.60,586.56 1587.70,658.20 1588.85,702.20 1590.00,742.50 1591.40,797.72 1592.80,849.30 1594.10,892.23 1595.40,931.00 1596.70,956.00 1598.12,969.64 1599.55,979.31 1600.98,987.18 1602.40,995.40 1602.80,998.34 1603.20,1000.30 1604.60,1002.21 1606.00,1003.77 1607.40,1005.01 1608.80,1005.95 1610.20,1006.63 1611.60,1007.08 1613.00,1007.32 1614.40,1007.40 1615.86,1007.27 1617.32,1006.93 1618.78,1006.40 1620.23,1005.74 1621.69,1004.99 1623.15,1004.20 1624.61,1003.41 1626.07,1002.66 1627.53,1002.00 1628.98,1001.47 1630.44,1001.13 1631.90,1001.00 1633.37,1001.14 1634.83,1001.54 1636.30,1002.14 1637.77,1002.89 1639.23,1003.75 1640.70,1004.65 1642.17,1005.55 1643.63,1006.41 1645.10,1007.16 1646.57,1007.76 1648.03,1008.16 1649.50,1008.30 1650.81,1008.21 1652.12,1007.96 1653.44,1007.58 1654.75,1007.12 1656.06,1006.60 1657.38,1006.07 1658.69,1005.56 1660.00,1005.10 1661.20,1004.63 1662.40,1004.11 1663.60,1003.68 1664.80,1003.50 1666.13,1003.93 1667.47,1005.00 1668.80,1006.40 1670.13,1007.80 1671.47,1008.87 1672.80,1009.30 1674.23,1009.19 1675.66,1008.90 1677.09,1008.48 1678.52,1007.96 1679.95,1007.40 1681.38,1006.84 1682.81,1006.32 1684.24,1005.90 1685.67,1005.61 1687.10,1005.50 1688.50,1005.72 1689.90,1006.30 1691.30,1007.11 1692.70,1008.05 1694.10,1008.99 1695.50,1009.80 1696.90,1010.38 1698.30,1010.60 1699.71,1010.60 1701.12,1010.60 1702.53,1010.60 1703.94,1010.60 1705.36,1010.60 1706.77,1010.60 1708.18,1010.60 1709.59,1010.60 1711.00,1010.60 1712.42,1010.41 1713.84,1009.91 1715.27,1009.17 1716.69,1008.31 1718.11,1007.39 1719.53,1006.53 1720.96,1005.79 1722.38,1005.29 1723.80,1005.10 1725.13,1005.10 1726.47,1005.10 1727.80,1005.10 1729.13,1005.10 1730.47,1005.10 1731.80,1005.10 1733.16,1004.34 1734.51,1002.38 1735.87,999.71 1737.23,996.79 1738.59,994.12 1739.94,992.16 1741.30,991.40 1742.74,991.71 1744.18,992.57 1745.62,993.86 1747.06,995.47 1748.50,997.26 1749.94,999.14 1751.38,1000.98 1752.82,1002.67 1754.26,1004.08 1755.70,1005.10 1757.13,1005.89 1758.56,1006.67 1759.99,1007.44 1761.42,1008.16 1762.85,1008.83 1764.28,1009.42 1765.71,1009.91 1767.14,1010.28 1768.57,1010.52 1770.00,1010.60 1771.42,1010.58 1772.84,1010.53 1774.27,1010.44 1775.69,1010.31 1777.11,1010.16 1778.53,1009.98 1779.96,1009.78 1781.38,1009.55 1782.80,1009.30 1784.20,1008.75 1785.60,1007.72 1787.00,1006.38 1788.40,1004.90 1789.80,1003.45 1791.20,1002.20 1792.60,1001.33 1794.00,1001.00 1795.28,1001.06 1796.56,1001.21 1797.84,1001.43 1799.12,1001.71 1800.40,1002.00 1801.85,1002.52 1803.29,1003.36 1804.74,1004.45 1806.18,1005.70 1807.63,1007.04 1809.07,1008.38 1810.52,1009.66 1811.96,1010.78 1813.41,1011.68 1814.85,1012.28 1816.30,1012.50 1817.77,1012.38 1819.24,1012.03 1820.71,1011.50 1822.18,1010.83 1823.65,1010.06 1825.12,1009.23 1826.58,1008.37 1828.05,1007.54 1829.52,1006.77 1830.99,1006.10 1832.46,1005.57 1833.93,1005.22 1835.40,1005.10 1836.85,1005.23 1838.31,1005.58 1839.76,1006.10 1841.22,1006.75 1842.67,1007.48 1844.13,1008.22 1845.58,1008.95 1847.04,1009.60 1848.49,1010.12 1849.95,1010.47 1851.40,1010.60 1852.84,1010.59 1854.27,1010.57 1855.71,1010.54 1857.14,1010.50 1858.58,1010.46 1860.01,1010.40 1861.44,1010.33 1862.88,1010.26 1864.32,1010.19 1865.75,1010.11 1867.18,1010.02 1868.62,1009.94 1870.06,1009.85 1871.49,1009.76 1872.92,1009.68 1874.36,1009.59 1875.79,1009.51 1877.23,1009.44 1878.66,1009.37 1880.10,1009.30 1881.59,1009.24 1883.09,1009.19 1884.58,1009.14 1886.07,1009.10 1887.57,1009.06 1889.06,1009.02 1890.56,1008.98 1892.05,1008.94 1893.54,1008.89 1895.04,1008.84 1896.53,1008.78 1898.03,1008.71 1899.52,1008.63 1901.01,1008.53 1902.51,1008.42 1904.00,1008.30 1905.40,1007.82 1906.80,1006.77 1908.20,1005.34 1909.60,1003.73 1911.00,1002.13 1912.40,1000.74 1913.80,999.77 1915.20,999.40 1916.57,999.84 1917.94,1000.99 1919.31,1002.55 1920.69,1004.25 1922.06,1005.81 1923.43,1006.96 1924.80,1007.40 1926.25,1007.25 1927.69,1006.84 1929.14,1006.23 1930.58,1005.48 1932.03,1004.64 1933.47,1003.76 1934.92,1002.92 1936.36,1002.17 1937.81,1001.56 1939.25,1001.15 1940.70,1001.00 1942.15,1001.18 1943.61,1001.69 1945.06,1002.44 1946.52,1003.38 1947.97,1004.43 1949.43,1005.53 1950.88,1006.61 1952.34,1007.59 1953.79,1008.41 1955.25,1009.01 1956.70,1009.30 1958.15,1009.42 1959.59,1009.53 1961.04,1009.64 1962.48,1009.74 1963.93,1009.83 1965.37,1009.92 1966.82,1010.00 1968.26,1010.08 1969.71,1010.15 1971.15,1010.22 1972.60,1010.28 1974.05,1010.34 1975.49,1010.39 1976.94,1010.43 1978.38,1010.47 1979.83,1010.51 1981.27,1010.54 1982.72,1010.56 1984.16,1010.58 1985.61,1010.59 1987.05,1010.60 1988.50,1010.60 1989.98,1010.55 1991.45,1010.39 1992.93,1010.15 1994.41,1009.84 1995.88,1009.47 1997.36,1009.06 1998.84,1008.61 2000.32,1008.15 2001.79,1007.69 2003.27,1007.24 2004.75,1006.82 2006.22,1006.43 2007.70,1006.10 2009.13,1005.79 2010.56,1005.46 2011.99,1005.11 2013.42,1004.77 2014.85,1004.44 2016.28,1004.14 2017.71,1003.88 2019.14,1003.68 2020.57,1003.55 2022.00,1003.50 2023.33,1003.74 2024.67,1004.33 2026.00,1005.10 2027.33,1005.87 2028.67,1006.46 2030.00,1006.70 2031.42,1006.59 2032.84,1006.30 2034.27,1005.87 2035.69,1005.37 2037.11,1004.83 2038.53,1004.33 2039.96,1003.90 2041.38,1003.61 2042.80,1003.50 2044.25,1003.72 2045.69,1004.34 2047.14,1005.25 2048.58,1006.39 2050.03,1007.65 2051.47,1008.95 2052.92,1010.21 2054.36,1011.35 2055.81,1012.26 2057.25,1012.88 2058.70,1013.10 2060.14,1013.09 2061.58,1013.08 2063.02,1013.05 2064.46,1013.01 2065.90,1012.96 2067.34,1012.90 2068.78,1012.82 2070.22,1012.73 2071.66,1012.62 2073.10,1012.50 2074.42,1011.71 2075.73,1009.71 2077.05,1006.73 2078.37,1002.98 2079.68,998.66 2081.00,994.00 2082.25,987.37 2083.50,978.01 2084.75,968.14 2086.00,960.00 2087.24,953.14 2088.48,946.18 2089.72,940.04 2090.96,935.67 2092.20,934.00 2093.40,935.04 2094.60,937.77 2095.80,941.65 2097.00,946.10 2098.33,954.20 2099.67,965.34 2101.00,975.00 2102.40,982.86 2103.80,990.24 2105.20,996.17 2106.60,999.70 2107.99,1001.55 2109.38,1003.13 2110.76,1004.48 2112.15,1005.60 2113.54,1006.53 2114.92,1007.27 2116.31,1007.86 2117.70,1008.30 2119.14,1008.68 2120.58,1009.04 2122.02,1009.37 2123.46,1009.67 2124.90,1009.94 2126.34,1010.17 2127.78,1010.35 2129.22,1010.49 2130.66,1010.57 2132.10,1010.60 2133.59,1010.60 2135.07,1010.60 2136.56,1010.60 2138.05,1010.60 2139.53,1010.60 2141.02,1010.60 2142.51,1010.60 2143.99,1010.60 2145.48,1010.60 2146.97,1010.60 2148.45,1010.60 2149.94,1010.60 2151.43,1010.60 2152.91,1010.60 2154.40,1010.60 2155.85,1010.53 2157.31,1010.32 2158.76,1010.02 2160.22,1009.64 2161.67,1009.22 2163.13,1008.78 2164.58,1008.36 2166.04,1007.98 2167.49,1007.68 2168.95,1007.47 2170.40,1007.40 2171.82,1007.41 2173.23,1007.43 2174.65,1007.46 2176.07,1007.50 2177.48,1007.56 2178.90,1007.63 2180.32,1007.71 2181.73,1007.80 2183.15,1007.90 2184.57,1008.02 2185.98,1008.14 2187.40,1008.28 2188.82,1008.42 2190.23,1008.58 2191.65,1008.75 2193.07,1008.92 2194.48,1009.11 2195.90,1009.30 2197.27,1009.65 2198.64,1010.25 2200.01,1010.98 2201.39,1011.75 2202.76,1012.42 2204.13,1012.91 2205.50,1013.10 2206.87,1012.75 2208.23,1011.74 2209.60,1010.11 2210.97,1007.91 2212.33,1005.19 2213.70,1002.00 2215.03,996.11 2216.37,985.69 2217.70,971.60 2219.05,946.34 2220.40,911.00 2221.25,885.83 2222.10,857.00 2222.95,822.86 2223.80,789.60 2225.00,753.88 2226.20,722.20 2227.55,689.74 2228.90,654.80 2229.75,619.44 2230.60,592.50 2231.95,581.41 2233.30,577.30 2233.65,577.30 2234.00,577.30 2234.80,601.79 2235.60,634.60 2236.80,653.02 2238.00,668.30 2239.35,689.18 2240.70,715.50 2241.55,742.31 2242.40,772.80 2243.55,812.90 2244.70,843.60 2246.17,861.29 2247.63,873.17 2249.10,887.40 2250.23,905.32 2251.37,925.89 2252.50,941.30 2253.75,951.11 2255.00,958.70 2256.25,965.16 2257.50,971.60 2258.63,978.18 2259.77,984.41 2260.90,988.50 2262.24,991.05 2263.58,993.04 2264.92,994.59 2266.26,995.84 2267.60,996.90 2268.95,997.87 2270.30,998.76 2271.65,999.57 2273.00,1000.30 2274.35,1000.98 2275.70,1001.60 2277.05,1002.17 2278.40,1002.71 2279.75,1003.22 2281.10,1003.70 2282.47,1004.19 2283.84,1004.70 2285.21,1005.21 2286.58,1005.70 2287.95,1006.15 2289.32,1006.56 2290.69,1006.90 2292.06,1007.17 2293.43,1007.34 2294.80,1007.40 2296.25,1007.40 2297.69,1007.40 2299.14,1007.40 2300.58,1007.40 2302.03,1007.40 2303.47,1007.40 2304.92,1007.40 2306.36,1007.40 2307.81,1007.40 2309.25,1007.40 2310.70,1007.40 2312.13,1006.83 2313.56,1005.25 2314.99,1002.88 2316.42,999.91 2317.85,996.55 2319.28,993.01 2320.71,989.51 2322.14,986.23 2323.57,983.39 2325.00,981.20 2326.33,979.44 2327.67,977.63 2329.00,975.94 2330.33,974.53 2331.67,973.56 2333.00,973.20 2334.33,973.32 2335.67,973.66 2337.00,974.18 2338.33,974.83 2339.67,975.59 2341.00,976.40 2342.33,977.50 2343.67,979.06 2345.00,980.96 2346.33,983.10 2347.67,985.35 2349.00,987.60 2350.37,990.33 2351.74,993.71 2353.11,997.38 2354.49,1000.95 2355.86,1004.06 2357.23,1006.34 2358.60,1007.40 2360.05,1007.72 2361.49,1007.98 2362.94,1008.18 2364.38,1008.35 2365.83,1008.49 2367.27,1008.61 2368.72,1008.72 2370.16,1008.84 2371.61,1008.96 2373.05,1009.12 2374.50,1009.30 2375.92,1009.53 2377.34,1009.82 2378.77,1010.14 2380.19,1010.47 2381.61,1010.78 2383.03,1011.06 2384.46,1011.29 2385.88,1011.44 2387.30,1011.50 2388.77,1011.50 2390.24,1011.50 2391.70,1011.49 2393.17,1011.49 2394.64,1011.48 2396.11,1011.47 2397.58,1011.45 2399.04,1011.44 2400.51,1011.42 2401.98,1011.40 2403.45,1011.37 2404.92,1011.34 2406.38,1011.31 2407.85,1011.28 2409.32,1011.24 2410.79,1011.19 2412.26,1011.15 2413.72,1011.10 2415.19,1011.04 2416.66,1010.98 2418.13,1010.91 2419.60,1010.84 2421.06,1010.77 2422.53,1010.69 2424.00,1010.60 2425.33,1010.14 2426.67,1009.00 2428.00,1007.31 2429.33,1005.21 2430.67,1002.83 2432.00,1000.30 2433.40,997.17 2434.80,993.06 2436.20,987.79 2437.60,981.20 2439.07,968.40 2440.55,949.17 2442.03,929.16 2443.50,914.00 2444.86,903.80 2446.22,893.95 2447.58,885.54 2448.94,879.69 2450.30,877.50 2450.65,877.50 2451.00,877.50 2452.42,880.37 2453.83,887.91 2455.25,898.47 2456.67,910.43 2458.08,922.15 2459.50,932.00 2460.90,940.65 2462.30,949.66 2463.70,958.48 2465.10,966.52 2466.50,973.22 2467.90,978.00 2469.18,981.29 2470.46,984.33 2471.74,986.85 2473.02,988.57 2474.30,989.20 2475.73,988.51 2477.16,986.64 2478.59,983.89 2480.02,980.54 2481.45,976.90 2482.88,973.26 2484.31,969.91 2485.74,967.16 2487.17,965.29 2488.60,964.60 2490.04,965.56 2491.48,968.16 2492.92,971.99 2494.36,976.64 2495.80,981.70 2497.24,986.76 2498.68,991.41 2500.12,995.24 2501.56,997.84 2503.00,998.80 2504.36,998.67 2505.71,998.34 2507.07,997.89 2508.43,997.41 2509.79,996.96 2511.14,996.63 2512.50,996.50 2513.99,996.67 2515.47,997.13 2516.96,997.85 2518.44,998.78 2519.93,999.85 2521.41,1001.03 2522.90,1002.27 2524.39,1003.51 2525.87,1004.70 2527.36,1005.80 2528.84,1006.76 2530.33,1007.53 2531.81,1008.06 2533.30,1008.30 2534.78,1008.37 2536.26,1008.44 2537.74,1008.50 2539.21,1008.56 2540.69,1008.61 2542.17,1008.66 2543.65,1008.70 2545.13,1008.74 2546.61,1008.77 2548.09,1008.80 2549.56,1008.83 2551.04,1008.86 2552.52,1008.89 2554.00,1008.91 2555.48,1008.93 2556.96,1008.95 2558.44,1008.98 2559.91,1009.00 2561.39,1009.02 2562.87,1009.04 2564.35,1009.07 2565.83,1009.09 2567.31,1009.12 2568.79,1009.15 2570.26,1009.18 2571.74,1009.22 2573.22,1009.26 2574.70,1009.30 2576.15,1009.35 2577.61,1009.41 2579.06,1009.48 2580.52,1009.55 2581.97,1009.62 2583.43,1009.70 2584.88,1009.76 2586.34,1009.82 2587.79,1009.86 2589.25,1009.89 2590.70,1009.90 2592.17,1009.88 2593.64,1009.82 2595.11,1009.73 2596.58,1009.59 2598.05,1009.42 2599.52,1009.21 2600.98,1008.96 2602.45,1008.68 2603.92,1008.36 2605.39,1008.00 2606.86,1007.60 2608.33,1007.17 2609.80,1006.70 2611.26,1005.69 2612.71,1003.78 2614.17,1001.25 2615.63,998.35 2617.09,995.33 2618.54,992.46 2620.00,990.00 2621.32,987.86 2622.65,985.51 2623.97,983.10 2625.30,980.77 2626.62,978.70 2627.95,977.02 2629.28,975.91 2630.60,975.50 2632.05,975.91 2633.49,977.06 2634.94,978.78 2636.38,980.94 2637.83,983.38 2639.27,985.95 2640.72,988.51 2642.16,990.90 2643.61,992.98 2645.05,994.59 2646.50,995.60 2647.90,996.15 2649.30,996.57 2650.70,996.91 2652.10,997.20 2653.50,997.49 2654.90,997.83 2656.30,998.25 2657.70,998.80 2659.06,999.74 2660.41,1001.20 2661.77,1002.94 2663.13,1004.75 2664.49,1006.40 2665.84,1007.65 2667.20,1008.30 2668.65,1008.57 2670.11,1008.82 2671.56,1009.04 2673.02,1009.24 2674.47,1009.41 2675.93,1009.56 2677.38,1009.68 2678.84,1009.78 2680.29,1009.85 2681.75,1009.89 2683.20,1009.90 2684.62,1009.90 2686.03,1009.90 2687.45,1009.90 2688.87,1009.90 2690.28,1009.90 2691.70,1009.90 2693.12,1009.90 2694.53,1009.90 2695.95,1009.90 2697.37,1009.90 2698.78,1009.90 2700.20,1009.90 2701.62,1009.90 2703.03,1009.90 2704.45,1009.90 2705.87,1009.90 2707.28,1009.90 2708.70,1009.90 2710.17,1009.88 2711.64,1009.81 2713.11,1009.70 2714.58,1009.54 2716.05,1009.35 2717.52,1009.13 2718.98,1008.86 2720.45,1008.57 2721.92,1008.25 2723.39,1007.90 2724.86,1007.52 2726.33,1007.12 2727.80,1006.70 2729.25,1006.10 2730.71,1005.20 2732.16,1004.03 2733.62,1002.65 2735.07,1001.10 2736.53,999.42 2737.98,997.67 2739.44,995.88 2740.89,994.11 2742.35,992.40 2743.80,990.80 2745.23,989.13 2746.66,987.21 2748.09,985.13 2749.52,983.00 2750.95,980.92 2752.38,978.99 2753.81,977.31 2755.24,975.98 2756.67,975.11 2758.10,974.80 2759.50,975.41 2760.90,977.08 2762.30,979.52 2763.70,982.48 2765.10,985.67 2766.50,988.84 2767.90,991.70 2769.30,994.00 2770.67,995.91 2772.04,997.84 2773.41,999.71 2774.79,1001.44 2776.16,1002.96 2777.53,1004.21 2778.90,1005.10 2780.35,1005.81 2781.79,1006.49 2783.24,1007.13 2784.68,1007.72 2786.13,1008.26 2787.57,1008.73 2789.02,1009.13 2790.46,1009.46 2791.91,1009.70 2793.35,1009.85 2794.80,1009.90 2796.28,1009.90 2797.76,1009.90 2799.25,1009.90 2800.73,1009.90 2802.21,1009.90 2803.69,1009.90 2805.18,1009.90 2806.66,1009.90 2808.14,1009.90 2809.62,1009.90 2811.10,1009.90 2812.59,1009.90 2814.07,1009.90 2815.55,1009.90 2817.03,1009.90 2818.51,1009.90 2820.00,1009.90 2821.48,1009.90 2822.96,1009.90 2824.44,1009.90 2825.93,1009.90 2827.41,1009.90 2828.89,1009.90 2830.37,1009.90 2831.85,1009.90 2833.34,1009.90 2834.82,1009.90 2836.30,1009.90 2837.77,1009.79 2839.24,1009.49 2840.71,1009.03 2842.18,1008.46 2843.65,1007.79 2845.12,1007.07 2846.58,1006.33 2848.05,1005.61 2849.52,1004.94 2850.99,1004.37 2852.46,1003.91 2853.93,1003.61 2855.40,1003.50 2856.82,1003.58 2858.23,1003.82 2859.65,1004.19 2861.07,1004.68 2862.48,1005.27 2863.90,1005.94 2865.32,1006.66 2866.73,1007.42 2868.15,1008.21 2869.57,1009.00 2870.98,1009.77 2872.40,1010.50 2873.82,1011.18 2875.23,1011.79 2876.65,1012.31 2878.07,1012.71 2879.48,1012.98 2880.90,1013.10 2882.39,1013.14 2883.88,1013.18 2885.37,1013.22 2886.86,1013.26 2888.35,1013.29 2889.84,1013.32 2891.33,1013.36 2892.82,1013.39 2894.31,1013.42 2895.80,1013.44 2897.29,1013.47 2898.78,1013.49 2900.27,1013.52 2901.76,1013.54 2903.25,1013.56 2904.74,1013.58 2906.23,1013.59 2907.72,1013.61 2909.21,1013.62 2910.70,1013.64 2912.19,1013.65 2913.68,1013.66 2915.17,1013.67 2916.66,1013.68 2918.15,1013.68 2919.64,1013.69 2921.13,1013.69 2922.62,1013.70 2924.11,1013.70 2925.60,1013.70 2927.02,1013.67 2928.43,1013.59 2929.85,1013.47 2931.27,1013.31 2932.68,1013.12 2934.10,1012.90 2935.52,1012.66 2936.93,1012.41 2938.35,1012.15 2939.77,1011.89 2941.18,1011.64 2942.60,1011.40 2944.02,1011.18 2945.43,1010.99 2946.85,1010.83 2948.27,1010.71 2949.68,1010.63 2951.10,1010.60 2952.55,1010.61 2954.00,1010.64 2955.45,1010.70 2956.90,1010.77 2958.35,1010.85 2959.80,1010.95 2961.25,1011.05 2962.70,1011.17 2964.15,1011.29 2965.60,1011.42 2967.05,1011.55 2968.50,1011.68 2969.95,1011.81 2971.40,1011.93 2972.85,1012.05 2974.30,1012.15 2975.75,1012.25 2977.20,1012.33 2978.65,1012.40 2980.10,1012.46 2981.55,1012.49 2983.00,1012.50 2984.42,1011.93 2985.84,1010.33 2987.27,1007.87 2988.69,1004.72 2990.11,1001.04 2991.53,997.00 2992.96,992.77 2994.38,988.51 2995.80,984.40 2997.24,979.42 2998.68,972.99 3000.11,965.76 3001.55,958.37 3002.99,951.49 3004.43,945.76 3005.86,941.85 3007.30,940.40 3008.70,941.49 3010.10,944.44 3011.50,948.78 3012.90,954.06 3014.30,959.80 3015.70,965.54 3017.10,970.82 3018.50,975.16 3019.90,978.11 3021.30,979.20 3022.73,977.18 3024.17,972.04 3025.60,965.20 3026.70,957.15 3027.80,945.38 3028.90,931.80 3029.95,917.80 3031.00,898.40 3031.75,872.83 3032.50,842.00 3033.60,803.59 3034.70,762.50 3035.35,732.89 3036.00,700.00 3037.33,620.33 3038.67,534.96 3040.00,467.00 3041.40,423.25 3042.80,388.69 3044.20,346.00 3044.90,311.43 3045.60,279.00 3046.10,267.60 3046.60,255.00 3047.25,196.63 3047.90,150.00 3048.55,150.00 3049.20,150.00 3049.80,194.59 3050.40,255.00 3050.70,267.27 3051.00,279.00 3051.50,310.64 3052.00,346.00 3053.00,401.74 3054.00,467.00 3054.90,586.74 3055.80,700.00 3056.35,730.03 3056.90,753.90 3057.95,801.61 3059.00,844.50 3060.45,899.93 3061.90,937.20 3063.10,948.86 3064.30,956.68 3065.50,963.00 3066.77,969.47 3068.03,975.44 3069.30,980.84 3070.57,985.65 3071.83,989.82 3073.10,993.30 3074.40,996.47 3075.70,999.43 3077.00,1001.99 3078.30,1003.94 3079.60,1005.10 3080.67,1005.64 3081.73,1006.04 3082.80,1006.20 3084.26,1005.82 3085.73,1004.77 3087.19,1003.14 3088.66,1001.07 3090.12,998.65 3091.59,996.01 3093.05,993.25 3094.51,990.49 3095.98,987.85 3097.44,985.43 3098.91,983.36 3100.37,981.73 3101.84,980.68 3103.30,980.30 3104.75,980.65 3106.19,981.62 3107.64,983.12 3109.09,985.05 3110.53,987.33 3111.98,989.84 3113.43,992.50 3114.87,995.20 3116.32,997.86 3117.77,1000.37 3119.21,1002.65 3120.66,1004.58 3122.11,1006.08 3123.55,1007.05 3125.00,1007.40 3126.49,1007.32 3127.97,1007.09 3129.46,1006.73 3130.95,1006.28 3132.43,1005.74 3133.92,1005.15 3135.41,1004.52 3136.89,1003.88 3138.38,1003.25 3139.87,1002.66 3141.35,1002.12 3142.84,1001.67 3144.33,1001.31 3145.81,1001.08 3147.30,1001.00 3148.78,1001.13 3150.26,1001.49 3151.74,1002.05 3153.21,1002.76 3154.69,1003.59 3156.17,1004.50 3157.65,1005.45 3159.13,1006.40 3160.61,1007.31 3162.09,1008.14 3163.56,1008.85 3165.04,1009.41 3166.52,1009.77 3168.00,1009.90 3169.42,1009.85 3170.84,1009.70 3172.27,1009.49 3173.69,1009.23 3175.11,1008.97 3176.53,1008.71 3177.96,1008.50 3179.38,1008.35 3180.80,1008.30 3182.22,1008.35 3183.64,1008.50 3185.07,1008.71 3186.49,1008.97 3187.91,1009.23 3189.33,1009.49 3190.76,1009.70 3192.18,1009.85 3193.60,1009.90 3194.92,1009.51 3196.23,1008.49 3197.55,1007.09 3198.87,1005.53 3200.18,1004.06 3201.50,1002.90 3202.92,1001.96 3204.33,1001.11 3205.75,1000.32 3207.17,999.56 3208.58,998.79 3210.00,998.00" fill="none" stroke="#0000ff" stroke-width="2.1" stroke-linejoin="round"/>
<line x1="1586.5" y1="187.0" x2="1586.5" y2="1021.0" stroke="#1f86dc" stroke-width="1.6"/>
</g>
<circle cx="2700.4" cy="225.4" r="5" fill="#0000ff"/>
<text x="2715.8" y="232.0" font-size="24" fill="#0000ff" textLength="118.0" lengthAdjust="spacingAndGlyphs" stroke="#f4f4f4" stroke-width="0.25">МСД-1 : TIC</text>
<text x="2715.8" y="265.8" font-size="24" fill="#0000ff" textLength="264.8" lengthAdjust="spacingAndGlyphs" stroke="#ffffff" stroke-width="0.25">Колонка-1-Давление, кПа</text>
<text x="2715.8" y="299.5" font-size="24" fill="#008000" textLength="259.9" lengthAdjust="spacingAndGlyphs" stroke="#ffffff" stroke-width="0.25">Колонка-1-Поток, мл/мин</text>
<text x="2715.8" y="333.2" font-size="24" fill="#800080" textLength="265.3" lengthAdjust="spacingAndGlyphs" stroke="#ffffff" stroke-width="0.25">Колонка-1-Скорость, см/с</text>
<text x="2715.8" y="367.0" font-size="24" fill="#1e90ff" textLength="460.4" lengthAdjust="spacingAndGlyphs" stroke="#ffffff" stroke-width="0.25">МСД-1-Давление глубокого вакуума, мкТорр</text>
<text x="2715.8" y="400.8" font-size="24" fill="#000000" textLength="387.9" lengthAdjust="spacingAndGlyphs" stroke="#ffffff" stroke-width="0.25">МСД-1-Давление форвакуума, мТорр</text>
<text x="2715.8" y="434.5" font-size="24" fill="#0000ff" textLength="272.3" lengthAdjust="spacingAndGlyphs" stroke="#ffffff" stroke-width="0.25">МСД-1-Нагрузка катода, В</text>
<text x="2715.8" y="468.2" font-size="24" fill="#ff0000" textLength="298.2" lengthAdjust="spacingAndGlyphs" stroke="#ffffff" stroke-width="0.25">МСД-1-Напряжение +1.4В, В</text>
<text x="2715.8" y="502.0" font-size="24" fill="#008000" textLength="298.2" lengthAdjust="spacingAndGlyphs" stroke="#ffffff" stroke-width="0.25">МСД-1-Напряжение +1.8В, В</text>
<text x="2715.8" y="535.8" font-size="24" fill="#800080" textLength="292.0" lengthAdjust="spacingAndGlyphs" stroke="#ffffff" stroke-width="0.25">МСД-1-Напряжение +12В, В</text>
<text x="2715.8" y="569.5" font-size="24" fill="#008080" textLength="304.4" lengthAdjust="spacingAndGlyphs" stroke="#ffffff" stroke-width="0.25">МСД-1-Напряжение +150В, В</text>
<text x="2715.8" y="603.2" font-size="24" fill="#000080" textLength="292.0" lengthAdjust="spacingAndGlyphs" stroke="#ffffff" stroke-width="0.25">МСД-1-Напряжение +15В, В</text>
<text x="2715.8" y="637.0" font-size="24" fill="#c80000" textLength="292.0" lengthAdjust="spacingAndGlyphs" stroke="#ffffff" stroke-width="0.25">МСД-1-Напряжение +19В, В</text>
<text x="2715.8" y="670.8" font-size="24" fill="#808000" textLength="298.2" lengthAdjust="spacingAndGlyphs" stroke="#ffffff" stroke-width="0.25">МСД-1-Напряжение +2.5В, В</text>
<text x="2715.8" y="704.5" font-size="24" fill="#d2691e" textLength="292.0" lengthAdjust="spacingAndGlyphs" stroke="#ffffff" stroke-width="0.25">МСД-1-Напряжение +24В, В</text>
<text x="2715.8" y="738.2" font-size="24" fill="#800000" textLength="292.0" lengthAdjust="spacingAndGlyphs" stroke="#ffffff" stroke-width="0.25">МСД-1-Напряжение +28В, В</text>
<text x="2715.8" y="772.0" font-size="24" fill="#1e90ff" textLength="298.2" lengthAdjust="spacingAndGlyphs" stroke="#ffffff" stroke-width="0.25">МСД-1-Напряжение +3.3В, В</text>
<text x="2715.8" y="805.8" font-size="24" fill="#000000" textLength="292.0" lengthAdjust="spacingAndGlyphs" stroke="#ffffff" stroke-width="0.25">МСД-1-Напряжение +36В, В</text>
<text x="2715.8" y="839.5" font-size="24" fill="#0000ff" textLength="304.4" lengthAdjust="spacingAndGlyphs" stroke="#ffffff" stroke-width="0.25">МСД-1-Напряжение +550В, В</text>
<text x="2715.8" y="873.2" font-size="24" fill="#ff0000" textLength="279.6" lengthAdjust="spacingAndGlyphs" stroke="#ffffff" stroke-width="0.25">МСД-1-Напряжение +5В, В</text>
<text x="2715.8" y="907.0" font-size="24" fill="#008000" textLength="405.0" lengthAdjust="spacingAndGlyphs" stroke="#ffffff" stroke-width="0.25">МСД-1-Напряжение +5В аналоговое, В</text>
<text x="2715.8" y="940.8" font-size="24" fill="#800080" textLength="298.8" lengthAdjust="spacingAndGlyphs" stroke="#ffffff" stroke-width="0.25">МСД-1-Напряжение -150В, В</text>
<text x="2715.8" y="974.5" font-size="24" fill="#008080" textLength="286.4" lengthAdjust="spacingAndGlyphs" stroke="#ffffff" stroke-width="0.25">МСД-1-Напряжение -15В, В</text>
<text x="2715.8" y="1008.2" font-size="24" fill="#000080" textLength="286.4" lengthAdjust="spacingAndGlyphs" stroke="#ffffff" stroke-width="0.25">МСД-1-Напряжение -19В, В</text>
<path d="M324.9 187.5 L336.4 199.2 L347.9 187.5" fill="none" stroke="#000" stroke-width="1.3"/>
<path d="M622.3 187.5 L633.8 199.2 L645.3 187.5" fill="none" stroke="#000" stroke-width="1.3"/>
<path d="M1565.6 187.5 L1577.1 199.2 L1588.6 187.5" fill="none" stroke="#000" stroke-width="1.3"/>
<path d="M2214.4 187.5 L2225.9 199.2 L2237.4 187.5" fill="none" stroke="#000" stroke-width="1.3"/>
<path d="M3037.3 187.5 L3048.8 199.2 L3060.3 187.5" fill="none" stroke="#000" stroke-width="1.3"/>
<path d="M1451.1 187.5 L1462.7 199.2 L1474.2 187.5 Z" fill="#80bde8" stroke="#000" stroke-width="1.3"/>
<line x1="66.5" y1="187.0" x2="66.5" y2="1019.5" stroke="#8080ff" stroke-width="1.5"/>
<line x1="56.0" y1="1018.8" x2="66.5" y2="1018.8" stroke="#6a6aff" stroke-width="2.4"/>
<line x1="61.0" y1="981.0" x2="66.5" y2="981.0" stroke="#4a4aff" stroke-width="1.6"/>
<line x1="61.0" y1="943.1" x2="66.5" y2="943.1" stroke="#4a4aff" stroke-width="1.6"/>
<line x1="61.0" y1="905.3" x2="66.5" y2="905.3" stroke="#4a4aff" stroke-width="1.6"/>
<line x1="61.0" y1="867.4" x2="66.5" y2="867.4" stroke="#4a4aff" stroke-width="1.6"/>
<line x1="56.0" y1="829.6" x2="66.5" y2="829.6" stroke="#6a6aff" stroke-width="2.4"/>
<line x1="61.0" y1="791.8" x2="66.5" y2="791.8" stroke="#4a4aff" stroke-width="1.6"/>
<line x1="61.0" y1="753.9" x2="66.5" y2="753.9" stroke="#4a4aff" stroke-width="1.6"/>
<line x1="61.0" y1="716.1" x2="66.5" y2="716.1" stroke="#4a4aff" stroke-width="1.6"/>
<line x1="61.0" y1="678.2" x2="66.5" y2="678.2" stroke="#4a4aff" stroke-width="1.6"/>
<line x1="56.0" y1="640.4" x2="66.5" y2="640.4" stroke="#6a6aff" stroke-width="2.4"/>
<line x1="61.0" y1="602.6" x2="66.5" y2="602.6" stroke="#4a4aff" stroke-width="1.6"/>
<line x1="61.0" y1="564.7" x2="66.5" y2="564.7" stroke="#4a4aff" stroke-width="1.6"/>
<line x1="61.0" y1="526.9" x2="66.5" y2="526.9" stroke="#4a4aff" stroke-width="1.6"/>
<line x1="61.0" y1="489.0" x2="66.5" y2="489.0" stroke="#4a4aff" stroke-width="1.6"/>
<line x1="56.0" y1="451.2" x2="66.5" y2="451.2" stroke="#6a6aff" stroke-width="2.4"/>
<line x1="61.0" y1="413.4" x2="66.5" y2="413.4" stroke="#4a4aff" stroke-width="1.6"/>
<line x1="61.0" y1="375.5" x2="66.5" y2="375.5" stroke="#4a4aff" stroke-width="1.6"/>
<line x1="61.0" y1="337.7" x2="66.5" y2="337.7" stroke="#4a4aff" stroke-width="1.6"/>
<line x1="61.0" y1="299.8" x2="66.5" y2="299.8" stroke="#4a4aff" stroke-width="1.6"/>
<line x1="56.0" y1="262.0" x2="66.5" y2="262.0" stroke="#6a6aff" stroke-width="2.4"/>
<line x1="61.0" y1="224.2" x2="66.5" y2="224.2" stroke="#4a4aff" stroke-width="1.6"/>
<text transform="translate(51.0,829.6) rotate(-90)" x="0" y="0" text-anchor="middle" font-size="23.5" fill="#3a3aff" textLength="59.0" lengthAdjust="spacingAndGlyphs" stroke="#ffffff" stroke-width="0.25">5e+06</text>
<text transform="translate(51.0,640.4) rotate(-90)" x="0" y="0" text-anchor="middle" font-size="23.5" fill="#3a3aff" textLength="59.0" lengthAdjust="spacingAndGlyphs" stroke="#ffffff" stroke-width="0.25">1e+07</text>
<text transform="translate(51.0,451.2) rotate(-90)" x="0" y="0" text-anchor="middle" font-size="23.5" fill="#3a3aff" textLength="74.4" lengthAdjust="spacingAndGlyphs" stroke="#ffffff" stroke-width="0.25">1.5e+07</text>
<text transform="translate(51.0,262.0) rotate(-90)" x="0" y="0" text-anchor="middle" font-size="23.5" fill="#3a3aff" textLength="59.0" lengthAdjust="spacingAndGlyphs" stroke="#ffffff" stroke-width="0.25">2e+07</text>
<g clip-path="url(#z1)">
<text transform="translate(51.0,1018.8) rotate(-90)" x="0" y="0" text-anchor="middle" font-size="23.5" fill="#3a3aff" textLength="11.5" lengthAdjust="spacingAndGlyphs" stroke="#ffffff" stroke-width="0.25">0</text>
</g>
<line x1="83.1" y1="1021.0" x2="83.1" y2="1030.7" stroke="#2020ff" stroke-width="2"/>
<line x1="104.9" y1="1021.0" x2="104.9" y2="1025.2" stroke="#5050ff" stroke-width="2"/>
<line x1="126.8" y1="1021.0" x2="126.8" y2="1025.2" stroke="#5050ff" stroke-width="2"/>
<line x1="148.6" y1="1021.0" x2="148.6" y2="1025.2" stroke="#5050ff" stroke-width="2"/>
<line x1="170.5" y1="1021.0" x2="170.5" y2="1025.2" stroke="#5050ff" stroke-width="2"/>
<line x1="192.3" y1="1021.0" x2="192.3" y2="1030.7" stroke="#2020ff" stroke-width="2"/>
<line x1="214.2" y1="1021.0" x2="214.2" y2="1025.2" stroke="#5050ff" stroke-width="2"/>
<line x1="236.0" y1="1021.0" x2="236.0" y2="1025.2" stroke="#5050ff" stroke-width="2"/>
<line x1="257.9" y1="1021.0" x2="257.9" y2="1025.2" stroke="#5050ff" stroke-width="2"/>
<line x1="279.7" y1="1021.0" x2="279.7" y2="1025.2" stroke="#5050ff" stroke-width="2"/>
<line x1="301.5" y1="1021.0" x2="301.5" y2="1030.7" stroke="#2020ff" stroke-width="2"/>
<line x1="323.4" y1="1021.0" x2="323.4" y2="1025.2" stroke="#5050ff" stroke-width="2"/>
<line x1="345.2" y1="1021.0" x2="345.2" y2="1025.2" stroke="#5050ff" stroke-width="2"/>
<line x1="367.1" y1="1021.0" x2="367.1" y2="1025.2" stroke="#5050ff" stroke-width="2"/>
<line x1="388.9" y1="1021.0" x2="388.9" y2="1025.2" stroke="#5050ff" stroke-width="2"/>
<line x1="410.8" y1="1021.0" x2="410.8" y2="1030.7" stroke="#2020ff" stroke-width="2"/>
<line x1="432.6" y1="1021.0" x2="432.6" y2="1025.2" stroke="#5050ff" stroke-width="2"/>
<line x1="454.4" y1="1021.0" x2="454.4" y2="1025.2" stroke="#5050ff" stroke-width="2"/>
<line x1="476.3" y1="1021.0" x2="476.3" y2="1025.2" stroke="#5050ff" stroke-width="2"/>
<line x1="498.1" y1="1021.0" x2="498.1" y2="1025.2" stroke="#5050ff" stroke-width="2"/>
<line x1="520.0" y1="1021.0" x2="520.0" y2="1030.7" stroke="#2020ff" stroke-width="2"/>
<line x1="541.8" y1="1021.0" x2="541.8" y2="1025.2" stroke="#5050ff" stroke-width="2"/>
<line x1="563.7" y1="1021.0" x2="563.7" y2="1025.2" stroke="#5050ff" stroke-width="2"/>
<line x1="585.5" y1="1021.0" x2="585.5" y2="1025.2" stroke="#5050ff" stroke-width="2"/>
<line x1="607.4" y1="1021.0" x2="607.4" y2="1025.2" stroke="#5050ff" stroke-width="2"/>
<line x1="629.2" y1="1021.0" x2="629.2" y2="1030.7" stroke="#2020ff" stroke-width="2"/>
<line x1="651.0" y1="1021.0" x2="651.0" y2="1025.2" stroke="#5050ff" stroke-width="2"/>
<line x1="672.9" y1="1021.0" x2="672.9" y2="1025.2" stroke="#5050ff" stroke-width="2"/>
<line x1="694.7" y1="1021.0" x2="694.7" y2="1025.2" stroke="#5050ff" stroke-width="2"/>
<line x1="716.6" y1="1021.0" x2="716.6" y2="1025.2" stroke="#5050ff" stroke-width="2"/>
<line x1="738.4" y1="1021.0" x2="738.4" y2="1030.7" stroke="#2020ff" stroke-width="2"/>
<line x1="760.3" y1="1021.0" x2="760.3" y2="1025.2" stroke="#5050ff" stroke-width="2"/>
<line x1="782.1" y1="1021.0" x2="782.1" y2="1025.2" stroke="#5050ff" stroke-width="2"/>
<line x1="804.0" y1="1021.0" x2="804.0" y2="1025.2" stroke="#5050ff" stroke-width="2"/>
<line x1="825.8" y1="1021.0" x2="825.8" y2="1025.2" stroke="#5050ff" stroke-width="2"/>
<line x1="847.6" y1="1021.0" x2="847.6" y2="1030.7" stroke="#2020ff" stroke-width="2"/>
<line x1="869.5" y1="1021.0" x2="869.5" y2="1025.2" stroke="#5050ff" stroke-width="2"/>
<line x1="891.3" y1="1021.0" x2="891.3" y2="1025.2" stroke="#5050ff" stroke-width="2"/>
<line x1="913.2" y1="1021.0" x2="913.2" y2="1025.2" stroke="#5050ff" stroke-width="2"/>
<line x1="935.0" y1="1021.0" x2="935.0" y2="1025.2" stroke="#5050ff" stroke-width="2"/>
<line x1="956.9" y1="1021.0" x2="956.9" y2="1030.7" stroke="#2020ff" stroke-width="2"/>
<line x1="978.7" y1="1021.0" x2="978.7" y2="1025.2" stroke="#5050ff" stroke-width="2"/>
<line x1="1000.5" y1="1021.0" x2="1000.5" y2="1025.2" stroke="#5050ff" stroke-width="2"/>
<line x1="1022.4" y1="1021.0" x2="1022.4" y2="1025.2" stroke="#5050ff" stroke-width="2"/>
<line x1="1044.2" y1="1021.0" x2="1044.2" y2="1025.2" stroke="#5050ff" stroke-width="2"/>
<line x1="1066.1" y1="1021.0" x2="1066.1" y2="1030.7" stroke="#2020ff" stroke-width="2"/>
<line x1="1087.9" y1="1021.0" x2="1087.9" y2="1025.2" stroke="#5050ff" stroke-width="2"/>
<line x1="1109.8" y1="1021.0" x2="1109.8" y2="1025.2" stroke="#5050ff" stroke-width="2"/>
<line x1="1131.6" y1="1021.0" x2="1131.6" y2="1025.2" stroke="#5050ff" stroke-width="2"/>
<line x1="1153.5" y1="1021.0" x2="1153.5" y2="1025.2" stroke="#5050ff" stroke-width="2"/>
<line x1="1175.3" y1="1021.0" x2="1175.3" y2="1030.7" stroke="#2020ff" stroke-width="2"/>
<line x1="1197.1" y1="1021.0" x2="1197.1" y2="1025.2" stroke="#5050ff" stroke-width="2"/>
<line x1="1219.0" y1="1021.0" x2="1219.0" y2="1025.2" stroke="#5050ff" stroke-width="2"/>
<line x1="1240.8" y1="1021.0" x2="1240.8" y2="1025.2" stroke="#5050ff" stroke-width="2"/>
<line x1="1262.7" y1="1021.0" x2="1262.7" y2="1025.2" stroke="#5050ff" stroke-width="2"/>
<line x1="1284.5" y1="1021.0" x2="1284.5" y2="1030.7" stroke="#2020ff" stroke-width="2"/>
<line x1="1306.4" y1="1021.0" x2="1306.4" y2="1025.2" stroke="#5050ff" stroke-width="2"/>
<line x1="1328.2" y1="1021.0" x2="1328.2" y2="1025.2" stroke="#5050ff" stroke-width="2"/>
<line x1="1350.1" y1="1021.0" x2="1350.1" y2="1025.2" stroke="#5050ff" stroke-width="2"/>
<line x1="1371.9" y1="1021.0" x2="1371.9" y2="1025.2" stroke="#5050ff" stroke-width="2"/>
<line x1="1393.7" y1="1021.0" x2="1393.7" y2="1030.7" stroke="#2020ff" stroke-width="2"/>
<line x1="1415.6" y1="1021.0" x2="1415.6" y2="1025.2" stroke="#5050ff" stroke-width="2"/>
<line x1="1437.4" y1="1021.0" x2="1437.4" y2="1025.2" stroke="#5050ff" stroke-width="2"/>
<line x1="1459.3" y1="1021.0" x2="1459.3" y2="1025.2" stroke="#5050ff" stroke-width="2"/>
<line x1="1481.1" y1="1021.0" x2="1481.1" y2="1025.2" stroke="#5050ff" stroke-width="2"/>
<line x1="1503.0" y1="1021.0" x2="1503.0" y2="1030.7" stroke="#2020ff" stroke-width="2"/>
<line x1="1524.8" y1="1021.0" x2="1524.8" y2="1025.2" stroke="#5050ff" stroke-width="2"/>
<line x1="1546.6" y1="1021.0" x2="1546.6" y2="1025.2" stroke="#5050ff" stroke-width="2"/>
<line x1="1568.5" y1="1021.0" x2="1568.5" y2="1025.2" stroke="#5050ff" stroke-width="2"/>
<line x1="1590.3" y1="1021.0" x2="1590.3" y2="1025.2" stroke="#5050ff" stroke-width="2"/>
<line x1="1612.2" y1="1021.0" x2="1612.2" y2="1030.7" stroke="#2020ff" stroke-width="2"/>
<line x1="1634.0" y1="1021.0" x2="1634.0" y2="1025.2" stroke="#5050ff" stroke-width="2"/>
<line x1="1655.9" y1="1021.0" x2="1655.9" y2="1025.2" stroke="#5050ff" stroke-width="2"/>
<line x1="1677.7" y1="1021.0" x2="1677.7" y2="1025.2" stroke="#5050ff" stroke-width="2"/>
<line x1="1699.6" y1="1021.0" x2="1699.6" y2="1025.2" stroke="#5050ff" stroke-width="2"/>
<line x1="1721.4" y1="1021.0" x2="1721.4" y2="1030.7" stroke="#2020ff" stroke-width="2"/>
<line x1="1743.2" y1="1021.0" x2="1743.2" y2="1025.2" stroke="#5050ff" stroke-width="2"/>
<line x1="1765.1" y1="1021.0" x2="1765.1" y2="1025.2" stroke="#5050ff" stroke-width="2"/>
<line x1="1786.9" y1="1021.0" x2="1786.9" y2="1025.2" stroke="#5050ff" stroke-width="2"/>
<line x1="1808.8" y1="1021.0" x2="1808.8" y2="1025.2" stroke="#5050ff" stroke-width="2"/>
<line x1="1830.6" y1="1021.0" x2="1830.6" y2="1030.7" stroke="#2020ff" stroke-width="2"/>
<line x1="1852.5" y1="1021.0" x2="1852.5" y2="1025.2" stroke="#5050ff" stroke-width="2"/>
<line x1="1874.3" y1="1021.0" x2="1874.3" y2="1025.2" stroke="#5050ff" stroke-width="2"/>
<line x1="1896.2" y1="1021.0" x2="1896.2" y2="1025.2" stroke="#5050ff" stroke-width="2"/>
<line x1="1918.0" y1="1021.0" x2="1918.0" y2="1025.2" stroke="#5050ff" stroke-width="2"/>
<line x1="1939.8" y1="1021.0" x2="1939.8" y2="1030.7" stroke="#2020ff" stroke-width="2"/>
<line x1="1961.7" y1="1021.0" x2="1961.7" y2="1025.2" stroke="#5050ff" stroke-width="2"/>
<line x1="1983.5" y1="1021.0" x2="1983.5" y2="1025.2" stroke="#5050ff" stroke-width="2"/>
<line x1="2005.4" y1="1021.0" x2="2005.4" y2="1025.2" stroke="#5050ff" stroke-width="2"/>
<line x1="2027.2" y1="1021.0" x2="2027.2" y2="1025.2" stroke="#5050ff" stroke-width="2"/>
<line x1="2049.1" y1="1021.0" x2="2049.1" y2="1030.7" stroke="#2020ff" stroke-width="2"/>
<line x1="2070.9" y1="1021.0" x2="2070.9" y2="1025.2" stroke="#5050ff" stroke-width="2"/>
<line x1="2092.7" y1="1021.0" x2="2092.7" y2="1025.2" stroke="#5050ff" stroke-width="2"/>
<line x1="2114.6" y1="1021.0" x2="2114.6" y2="1025.2" stroke="#5050ff" stroke-width="2"/>
<line x1="2136.4" y1="1021.0" x2="2136.4" y2="1025.2" stroke="#5050ff" stroke-width="2"/>
<line x1="2158.3" y1="1021.0" x2="2158.3" y2="1030.7" stroke="#2020ff" stroke-width="2"/>
<line x1="2180.1" y1="1021.0" x2="2180.1" y2="1025.2" stroke="#5050ff" stroke-width="2"/>
<line x1="2202.0" y1="1021.0" x2="2202.0" y2="1025.2" stroke="#5050ff" stroke-width="2"/>
<line x1="2223.8" y1="1021.0" x2="2223.8" y2="1025.2" stroke="#5050ff" stroke-width="2"/>
<line x1="2245.7" y1="1021.0" x2="2245.7" y2="1025.2" stroke="#5050ff" stroke-width="2"/>
<line x1="2267.5" y1="1021.0" x2="2267.5" y2="1030.7" stroke="#2020ff" stroke-width="2"/>
<line x1="2289.3" y1="1021.0" x2="2289.3" y2="1025.2" stroke="#5050ff" stroke-width="2"/>
<line x1="2311.2" y1="1021.0" x2="2311.2" y2="1025.2" stroke="#5050ff" stroke-width="2"/>
<line x1="2333.0" y1="1021.0" x2="2333.0" y2="1025.2" stroke="#5050ff" stroke-width="2"/>
<line x1="2354.9" y1="1021.0" x2="2354.9" y2="1025.2" stroke="#5050ff" stroke-width="2"/>
<line x1="2376.7" y1="1021.0" x2="2376.7" y2="1030.7" stroke="#2020ff" stroke-width="2"/>
<line x1="2398.6" y1="1021.0" x2="2398.6" y2="1025.2" stroke="#5050ff" stroke-width="2"/>
<line x1="2420.4" y1="1021.0" x2="2420.4" y2="1025.2" stroke="#5050ff" stroke-width="2"/>
<line x1="2442.3" y1="1021.0" x2="2442.3" y2="1025.2" stroke="#5050ff" stroke-width="2"/>
<line x1="2464.1" y1="1021.0" x2="2464.1" y2="1025.2" stroke="#5050ff" stroke-width="2"/>
<line x1="2485.9" y1="1021.0" x2="2485.9" y2="1030.7" stroke="#2020ff" stroke-width="2"/>
<line x1="2507.8" y1="1021.0" x2="2507.8" y2="1025.2" stroke="#5050ff" stroke-width="2"/>
<line x1="2529.6" y1="1021.0" x2="2529.6" y2="1025.2" stroke="#5050ff" stroke-width="2"/>
<line x1="2551.5" y1="1021.0" x2="2551.5" y2="1025.2" stroke="#5050ff" stroke-width="2"/>
<line x1="2573.3" y1="1021.0" x2="2573.3" y2="1025.2" stroke="#5050ff" stroke-width="2"/>
<line x1="2595.2" y1="1021.0" x2="2595.2" y2="1030.7" stroke="#2020ff" stroke-width="2"/>
<line x1="2617.0" y1="1021.0" x2="2617.0" y2="1025.2" stroke="#5050ff" stroke-width="2"/>
<line x1="2638.8" y1="1021.0" x2="2638.8" y2="1025.2" stroke="#5050ff" stroke-width="2"/>
<line x1="2660.7" y1="1021.0" x2="2660.7" y2="1025.2" stroke="#5050ff" stroke-width="2"/>
<line x1="2682.5" y1="1021.0" x2="2682.5" y2="1025.2" stroke="#5050ff" stroke-width="2"/>
<line x1="2704.4" y1="1021.0" x2="2704.4" y2="1030.7" stroke="#2020ff" stroke-width="2"/>
<line x1="2726.2" y1="1021.0" x2="2726.2" y2="1025.2" stroke="#5050ff" stroke-width="2"/>
<line x1="2748.1" y1="1021.0" x2="2748.1" y2="1025.2" stroke="#5050ff" stroke-width="2"/>
<line x1="2769.9" y1="1021.0" x2="2769.9" y2="1025.2" stroke="#5050ff" stroke-width="2"/>
<line x1="2791.8" y1="1021.0" x2="2791.8" y2="1025.2" stroke="#5050ff" stroke-width="2"/>
<line x1="2813.6" y1="1021.0" x2="2813.6" y2="1030.7" stroke="#2020ff" stroke-width="2"/>
<line x1="2835.4" y1="1021.0" x2="2835.4" y2="1025.2" stroke="#5050ff" stroke-width="2"/>
<line x1="2857.3" y1="1021.0" x2="2857.3" y2="1025.2" stroke="#5050ff" stroke-width="2"/>
<line x1="2879.1" y1="1021.0" x2="2879.1" y2="1025.2" stroke="#5050ff" stroke-width="2"/>
<line x1="2901.0" y1="1021.0" x2="2901.0" y2="1025.2" stroke="#5050ff" stroke-width="2"/>
<line x1="2922.8" y1="1021.0" x2="2922.8" y2="1030.7" stroke="#2020ff" stroke-width="2"/>
<line x1="2944.7" y1="1021.0" x2="2944.7" y2="1025.2" stroke="#5050ff" stroke-width="2"/>
<line x1="2966.5" y1="1021.0" x2="2966.5" y2="1025.2" stroke="#5050ff" stroke-width="2"/>
<line x1="2988.4" y1="1021.0" x2="2988.4" y2="1025.2" stroke="#5050ff" stroke-width="2"/>
<line x1="3010.2" y1="1021.0" x2="3010.2" y2="1025.2" stroke="#5050ff" stroke-width="2"/>
<line x1="3032.0" y1="1021.0" x2="3032.0" y2="1030.7" stroke="#2020ff" stroke-width="2"/>
<line x1="3053.9" y1="1021.0" x2="3053.9" y2="1025.2" stroke="#5050ff" stroke-width="2"/>
<line x1="3075.7" y1="1021.0" x2="3075.7" y2="1025.2" stroke="#5050ff" stroke-width="2"/>
<line x1="3097.6" y1="1021.0" x2="3097.6" y2="1025.2" stroke="#5050ff" stroke-width="2"/>
<line x1="3119.4" y1="1021.0" x2="3119.4" y2="1025.2" stroke="#5050ff" stroke-width="2"/>
<line x1="3141.3" y1="1021.0" x2="3141.3" y2="1030.7" stroke="#2020ff" stroke-width="2"/>
<line x1="3163.1" y1="1021.0" x2="3163.1" y2="1025.2" stroke="#5050ff" stroke-width="2"/>
<line x1="3184.9" y1="1021.0" x2="3184.9" y2="1025.2" stroke="#5050ff" stroke-width="2"/>
<text x="83.1" y="1053.1" font-size="23.5" fill="#2828ff" text-anchor="middle" textLength="27.5" lengthAdjust="spacingAndGlyphs" stroke="#ffffff" stroke-width="0.25">2.7</text>
<text x="192.3" y="1053.1" font-size="23.5" fill="#2828ff" text-anchor="middle" textLength="27.5" lengthAdjust="spacingAndGlyphs" stroke="#ffffff" stroke-width="0.25">2.8</text>
<text x="301.5" y="1053.1" font-size="23.5" fill="#2828ff" text-anchor="middle" textLength="27.5" lengthAdjust="spacingAndGlyphs" stroke="#ffffff" stroke-width="0.25">2.9</text>
<text x="410.8" y="1053.1" font-size="23.5" fill="#2828ff" text-anchor="middle" textLength="11.5" lengthAdjust="spacingAndGlyphs" stroke="#ffffff" stroke-width="0.25">3</text>
<text x="520.0" y="1053.1" font-size="23.5" fill="#2828ff" text-anchor="middle" textLength="27.5" lengthAdjust="spacingAndGlyphs" stroke="#ffffff" stroke-width="0.25">3.1</text>
<text x="629.2" y="1053.1" font-size="23.5" fill="#2828ff" text-anchor="middle" textLength="27.5" lengthAdjust="spacingAndGlyphs" stroke="#ffffff" stroke-width="0.25">3.2</text>
<text x="738.4" y="1053.1" font-size="23.5" fill="#2828ff" text-anchor="middle" textLength="27.5" lengthAdjust="spacingAndGlyphs" stroke="#ffffff" stroke-width="0.25">3.3</text>
<text x="847.6" y="1053.1" font-size="23.5" fill="#2828ff" text-anchor="middle" textLength="27.5" lengthAdjust="spacingAndGlyphs" stroke="#ffffff" stroke-width="0.25">3.4</text>
<text x="956.9" y="1053.1" font-size="23.5" fill="#2828ff" text-anchor="middle" textLength="27.5" lengthAdjust="spacingAndGlyphs" stroke="#ffffff" stroke-width="0.25">3.5</text>
<text x="1066.1" y="1053.1" font-size="23.5" fill="#2828ff" text-anchor="middle" textLength="27.5" lengthAdjust="spacingAndGlyphs" stroke="#ffffff" stroke-width="0.25">3.6</text>
<text x="1175.3" y="1053.1" font-size="23.5" fill="#2828ff" text-anchor="middle" textLength="27.5" lengthAdjust="spacingAndGlyphs" stroke="#ffffff" stroke-width="0.25">3.7</text>
<text x="1284.5" y="1053.1" font-size="23.5" fill="#2828ff" text-anchor="middle" textLength="27.5" lengthAdjust="spacingAndGlyphs" stroke="#ffffff" stroke-width="0.25">3.8</text>
<text x="1393.7" y="1053.1" font-size="23.5" fill="#2828ff" text-anchor="middle" textLength="27.5" lengthAdjust="spacingAndGlyphs" stroke="#ffffff" stroke-width="0.25">3.9</text>
<text x="1503.0" y="1053.1" font-size="23.5" fill="#2828ff" text-anchor="middle" textLength="11.5" lengthAdjust="spacingAndGlyphs" stroke="#ffffff" stroke-width="0.25">4</text>
<text x="1612.2" y="1053.1" font-size="23.5" fill="#2828ff" text-anchor="middle" textLength="27.5" lengthAdjust="spacingAndGlyphs" stroke="#ffffff" stroke-width="0.25">4.1</text>
<text x="1721.4" y="1053.1" font-size="23.5" fill="#2828ff" text-anchor="middle" textLength="27.5" lengthAdjust="spacingAndGlyphs" stroke="#ffffff" stroke-width="0.25">4.2</text>
<text x="1830.6" y="1053.1" font-size="23.5" fill="#2828ff" text-anchor="middle" textLength="27.5" lengthAdjust="spacingAndGlyphs" stroke="#ffffff" stroke-width="0.25">4.3</text>
<text x="1939.8" y="1053.1" font-size="23.5" fill="#2828ff" text-anchor="middle" textLength="27.5" lengthAdjust="spacingAndGlyphs" stroke="#ffffff" stroke-width="0.25">4.4</text>
<text x="2049.1" y="1053.1" font-size="23.5" fill="#2828ff" text-anchor="middle" textLength="27.5" lengthAdjust="spacingAndGlyphs" stroke="#ffffff" stroke-width="0.25">4.5</text>
<text x="2158.3" y="1053.1" font-size="23.5" fill="#2828ff" text-anchor="middle" textLength="27.5" lengthAdjust="spacingAndGlyphs" stroke="#ffffff" stroke-width="0.25">4.6</text>
<text x="2267.5" y="1053.1" font-size="23.5" fill="#2828ff" text-anchor="middle" textLength="27.5" lengthAdjust="spacingAndGlyphs" stroke="#ffffff" stroke-width="0.25">4.7</text>
<text x="2376.7" y="1053.1" font-size="23.5" fill="#2828ff" text-anchor="middle" textLength="27.5" lengthAdjust="spacingAndGlyphs" stroke="#ffffff" stroke-width="0.25">4.8</text>
<text x="2485.9" y="1053.1" font-size="23.5" fill="#2828ff" text-anchor="middle" textLength="27.5" lengthAdjust="spacingAndGlyphs" stroke="#ffffff" stroke-width="0.25">4.9</text>
<text x="2595.2" y="1053.1" font-size="23.5" fill="#2828ff" text-anchor="middle" textLength="11.5" lengthAdjust="spacingAndGlyphs" stroke="#ffffff" stroke-width="0.25">5</text>
<text x="2704.4" y="1053.1" font-size="23.5" fill="#2828ff" text-anchor="middle" textLength="27.5" lengthAdjust="spacingAndGlyphs" stroke="#ffffff" stroke-width="0.25">5.1</text>
<text x="2813.6" y="1053.1" font-size="23.5" fill="#2828ff" text-anchor="middle" textLength="27.5" lengthAdjust="spacingAndGlyphs" stroke="#ffffff" stroke-width="0.25">5.2</text>
<text x="2922.8" y="1053.1" font-size="23.5" fill="#2828ff" text-anchor="middle" textLength="27.5" lengthAdjust="spacingAndGlyphs" stroke="#ffffff" stroke-width="0.25">5.3</text>
<text x="3032.0" y="1053.1" font-size="23.5" fill="#2828ff" text-anchor="middle" textLength="27.5" lengthAdjust="spacingAndGlyphs" stroke="#ffffff" stroke-width="0.25">5.4</text>
<text x="3141.3" y="1053.1" font-size="23.5" fill="#2828ff" text-anchor="middle" textLength="27.5" lengthAdjust="spacingAndGlyphs" stroke="#ffffff" stroke-width="0.25">5.5</text>
<rect x="3150.0" y="1034.0" width="52.0" height="24.0" fill="#ffffff"/>
<g clip-path="url(#c1)">
<text x="3160.5" y="1053.1" font-size="23.5" fill="#2828ff" textLength="42.0" lengthAdjust="spacingAndGlyphs" stroke="#ffffff" stroke-width="0.25">мин</text>
</g>
<rect x="29.0" y="1081.0" width="3174.0" height="792.8" fill="#ffffff" stroke="#7b828b" stroke-width="2"/>
<text x="75.0" y="1112.0" font-size="23.5" fill="#1a1a1a" textLength="472.0" lengthAdjust="spacingAndGlyphs" stroke="#ffffff" stroke-width="0.25">Пик:  4.07 мин (скан #858) Высота: 2730741.75</text>
<rect x="2840.0" y="1132.0" width="343.0" height="37.6" fill="#f0f6fd"/>
<text x="2841.0" y="1159.4" font-size="23.5" fill="#111" font-weight="bold" textLength="83.6" lengthAdjust="spacingAndGlyphs" stroke="#f0f6fd" stroke-width="0.25">Курсор:</text>
<text x="2938.0" y="1159.4" font-size="23.5" fill="#1a1a1a" textLength="240.8" lengthAdjust="spacingAndGlyphs" stroke="#f0f6fd" stroke-width="0.25">X=226.94 Y=9820798.88</text>
<line x1="67.5" y1="1124.0" x2="3192.6" y2="1124.0" stroke="#000" stroke-width="2"/>
<line x1="3191.6" y1="1123.0" x2="3191.6" y2="1835.0" stroke="#000" stroke-width="2"/>
<line x1="68.0" y1="1124.0" x2="68.0" y2="1833.0" stroke="#555" stroke-width="1.6"/>
<line x1="68.5" y1="1834.2" x2="3192.0" y2="1834.2" stroke="#555" stroke-width="1.8"/>
<line x1="58.0" y1="1832.6" x2="68.0" y2="1832.6" stroke="#666" stroke-width="2.2"/>
<line x1="63.4" y1="1814.2" x2="68.0" y2="1814.2" stroke="#222" stroke-width="1.6"/>
<line x1="63.4" y1="1795.9" x2="68.0" y2="1795.9" stroke="#222" stroke-width="1.6"/>
<line x1="63.4" y1="1777.5" x2="68.0" y2="1777.5" stroke="#222" stroke-width="1.6"/>
<line x1="63.4" y1="1759.2" x2="68.0" y2="1759.2" stroke="#222" stroke-width="1.6"/>
<line x1="58.0" y1="1740.8" x2="68.0" y2="1740.8" stroke="#666" stroke-width="2.2"/>
<line x1="63.4" y1="1722.4" x2="68.0" y2="1722.4" stroke="#222" stroke-width="1.6"/>
<line x1="63.4" y1="1704.1" x2="68.0" y2="1704.1" stroke="#222" stroke-width="1.6"/>
<line x1="63.4" y1="1685.7" x2="68.0" y2="1685.7" stroke="#222" stroke-width="1.6"/>
<line x1="63.4" y1="1667.4" x2="68.0" y2="1667.4" stroke="#222" stroke-width="1.6"/>
<line x1="58.0" y1="1649.0" x2="68.0" y2="1649.0" stroke="#666" stroke-width="2.2"/>
<line x1="63.4" y1="1630.6" x2="68.0" y2="1630.6" stroke="#222" stroke-width="1.6"/>
<line x1="63.4" y1="1612.3" x2="68.0" y2="1612.3" stroke="#222" stroke-width="1.6"/>
<line x1="63.4" y1="1593.9" x2="68.0" y2="1593.9" stroke="#222" stroke-width="1.6"/>
<line x1="63.4" y1="1575.6" x2="68.0" y2="1575.6" stroke="#222" stroke-width="1.6"/>
<line x1="58.0" y1="1557.2" x2="68.0" y2="1557.2" stroke="#666" stroke-width="2.2"/>
<line x1="63.4" y1="1538.8" x2="68.0" y2="1538.8" stroke="#222" stroke-width="1.6"/>
<line x1="63.4" y1="1520.5" x2="68.0" y2="1520.5" stroke="#222" stroke-width="1.6"/>
<line x1="63.4" y1="1502.1" x2="68.0" y2="1502.1" stroke="#222" stroke-width="1.6"/>
<line x1="63.4" y1="1483.8" x2="68.0" y2="1483.8" stroke="#222" stroke-width="1.6"/>
<line x1="58.0" y1="1465.4" x2="68.0" y2="1465.4" stroke="#666" stroke-width="2.2"/>
<line x1="63.4" y1="1447.0" x2="68.0" y2="1447.0" stroke="#222" stroke-width="1.6"/>
<line x1="63.4" y1="1428.7" x2="68.0" y2="1428.7" stroke="#222" stroke-width="1.6"/>
<line x1="63.4" y1="1410.3" x2="68.0" y2="1410.3" stroke="#222" stroke-width="1.6"/>
<line x1="63.4" y1="1392.0" x2="68.0" y2="1392.0" stroke="#222" stroke-width="1.6"/>
<line x1="58.0" y1="1373.6" x2="68.0" y2="1373.6" stroke="#666" stroke-width="2.2"/>
<line x1="63.4" y1="1355.2" x2="68.0" y2="1355.2" stroke="#222" stroke-width="1.6"/>
<line x1="63.4" y1="1336.9" x2="68.0" y2="1336.9" stroke="#222" stroke-width="1.6"/>
<line x1="63.4" y1="1318.5" x2="68.0" y2="1318.5" stroke="#222" stroke-width="1.6"/>
<line x1="63.4" y1="1300.2" x2="68.0" y2="1300.2" stroke="#222" stroke-width="1.6"/>
<line x1="58.0" y1="1281.8" x2="68.0" y2="1281.8" stroke="#666" stroke-width="2.2"/>
<line x1="63.4" y1="1263.4" x2="68.0" y2="1263.4" stroke="#222" stroke-width="1.6"/>
<line x1="63.4" y1="1245.1" x2="68.0" y2="1245.1" stroke="#222" stroke-width="1.6"/>
<line x1="63.4" y1="1226.7" x2="68.0" y2="1226.7" stroke="#222" stroke-width="1.6"/>
<line x1="63.4" y1="1208.4" x2="68.0" y2="1208.4" stroke="#222" stroke-width="1.6"/>
<line x1="58.0" y1="1190.0" x2="68.0" y2="1190.0" stroke="#666" stroke-width="2.2"/>
<line x1="63.4" y1="1171.6" x2="68.0" y2="1171.6" stroke="#222" stroke-width="1.6"/>
<line x1="63.4" y1="1153.3" x2="68.0" y2="1153.3" stroke="#222" stroke-width="1.6"/>
<line x1="63.4" y1="1134.9" x2="68.0" y2="1134.9" stroke="#222" stroke-width="1.6"/>
<text transform="translate(52.2,1740.8) rotate(-90)" x="0" y="0" text-anchor="middle" font-size="23.5" fill="#1a1a1a" textLength="58.8" lengthAdjust="spacingAndGlyphs" stroke="#ffffff" stroke-width="0.25">1e+06</text>
<text transform="translate(52.2,1649.0) rotate(-90)" x="0" y="0" text-anchor="middle" font-size="23.5" fill="#1a1a1a" textLength="58.8" lengthAdjust="spacingAndGlyphs" stroke="#ffffff" stroke-width="0.25">2e+06</text>
<text transform="translate(52.2,1557.2) rotate(-90)" x="0" y="0" text-anchor="middle" font-size="23.5" fill="#1a1a1a" textLength="58.8" lengthAdjust="spacingAndGlyphs" stroke="#ffffff" stroke-width="0.25">3e+06</text>
<text transform="translate(52.2,1465.4) rotate(-90)" x="0" y="0" text-anchor="middle" font-size="23.5" fill="#1a1a1a" textLength="58.8" lengthAdjust="spacingAndGlyphs" stroke="#ffffff" stroke-width="0.25">4e+06</text>
<text transform="translate(52.2,1373.6) rotate(-90)" x="0" y="0" text-anchor="middle" font-size="23.5" fill="#1a1a1a" textLength="58.8" lengthAdjust="spacingAndGlyphs" stroke="#ffffff" stroke-width="0.25">5e+06</text>
<text transform="translate(52.2,1281.8) rotate(-90)" x="0" y="0" text-anchor="middle" font-size="23.5" fill="#1a1a1a" textLength="58.8" lengthAdjust="spacingAndGlyphs" stroke="#ffffff" stroke-width="0.25">6e+06</text>
<text transform="translate(52.2,1190.0) rotate(-90)" x="0" y="0" text-anchor="middle" font-size="23.5" fill="#1a1a1a" textLength="58.8" lengthAdjust="spacingAndGlyphs" stroke="#ffffff" stroke-width="0.25">7e+06</text>
<g clip-path="url(#z2)">
<text transform="translate(52.2,1832.6) rotate(-90)" x="0" y="0" text-anchor="middle" font-size="23.5" fill="#1a1a1a" textLength="11.5" lengthAdjust="spacingAndGlyphs" stroke="#ffffff" stroke-width="0.25">0</text>
</g>
<line x1="77.3" y1="1834.0" x2="77.3" y2="1838.6" stroke="#222" stroke-width="1.8"/>
<line x1="93.8" y1="1834.0" x2="93.8" y2="1838.6" stroke="#222" stroke-width="1.8"/>
<line x1="110.3" y1="1834.0" x2="110.3" y2="1838.6" stroke="#222" stroke-width="1.8"/>
<line x1="126.8" y1="1834.0" x2="126.8" y2="1844.2" stroke="#6a6a6a" stroke-width="2.2"/>
<line x1="143.3" y1="1834.0" x2="143.3" y2="1838.6" stroke="#222" stroke-width="1.8"/>
<line x1="159.8" y1="1834.0" x2="159.8" y2="1838.6" stroke="#222" stroke-width="1.8"/>
<line x1="176.3" y1="1834.0" x2="176.3" y2="1838.6" stroke="#222" stroke-width="1.8"/>
<line x1="192.8" y1="1834.0" x2="192.8" y2="1838.6" stroke="#222" stroke-width="1.8"/>
<line x1="209.2" y1="1834.0" x2="209.2" y2="1844.2" stroke="#6a6a6a" stroke-width="2.2"/>
<line x1="225.7" y1="1834.0" x2="225.7" y2="1838.6" stroke="#222" stroke-width="1.8"/>
<line x1="242.2" y1="1834.0" x2="242.2" y2="1838.6" stroke="#222" stroke-width="1.8"/>
<line x1="258.7" y1="1834.0" x2="258.7" y2="1838.6" stroke="#222" stroke-width="1.8"/>
<line x1="275.2" y1="1834.0" x2="275.2" y2="1838.6" stroke="#222" stroke-width="1.8"/>
<line x1="291.7" y1="1834.0" x2="291.7" y2="1844.2" stroke="#6a6a6a" stroke-width="2.2"/>
<line x1="308.2" y1="1834.0" x2="308.2" y2="1838.6" stroke="#222" stroke-width="1.8"/>
<line x1="324.7" y1="1834.0" x2="324.7" y2="1838.6" stroke="#222" stroke-width="1.8"/>
<line x1="341.2" y1="1834.0" x2="341.2" y2="1838.6" stroke="#222" stroke-width="1.8"/>
<line x1="357.7" y1="1834.0" x2="357.7" y2="1838.6" stroke="#222" stroke-width="1.8"/>
<line x1="374.1" y1="1834.0" x2="374.1" y2="1844.2" stroke="#6a6a6a" stroke-width="2.2"/>
<line x1="390.6" y1="1834.0" x2="390.6" y2="1838.6" stroke="#222" stroke-width="1.8"/>
<line x1="407.1" y1="1834.0" x2="407.1" y2="1838.6" stroke="#222" stroke-width="1.8"/>
<line x1="423.6" y1="1834.0" x2="423.6" y2="1838.6" stroke="#222" stroke-width="1.8"/>
<line x1="440.1" y1="1834.0" x2="440.1" y2="1838.6" stroke="#222" stroke-width="1.8"/>
<line x1="456.6" y1="1834.0" x2="456.6" y2="1844.2" stroke="#6a6a6a" stroke-width="2.2"/>
<line x1="473.1" y1="1834.0" x2="473.1" y2="1838.6" stroke="#222" stroke-width="1.8"/>
<line x1="489.6" y1="1834.0" x2="489.6" y2="1838.6" stroke="#222" stroke-width="1.8"/>
<line x1="506.1" y1="1834.0" x2="506.1" y2="1838.6" stroke="#222" stroke-width="1.8"/>
<line x1="522.6" y1="1834.0" x2="522.6" y2="1838.6" stroke="#222" stroke-width="1.8"/>
<line x1="539.0" y1="1834.0" x2="539.0" y2="1844.2" stroke="#6a6a6a" stroke-width="2.2"/>
<line x1="555.5" y1="1834.0" x2="555.5" y2="1838.6" stroke="#222" stroke-width="1.8"/>
<line x1="572.0" y1="1834.0" x2="572.0" y2="1838.6" stroke="#222" stroke-width="1.8"/>
<line x1="588.5" y1="1834.0" x2="588.5" y2="1838.6" stroke="#222" stroke-width="1.8"/>
<line x1="605.0" y1="1834.0" x2="605.0" y2="1838.6" stroke="#222" stroke-width="1.8"/>
<line x1="621.5" y1="1834.0" x2="621.5" y2="1844.2" stroke="#6a6a6a" stroke-width="2.2"/>
<line x1="638.0" y1="1834.0" x2="638.0" y2="1838.6" stroke="#222" stroke-width="1.8"/>
<line x1="654.5" y1="1834.0" x2="654.5" y2="1838.6" stroke="#222" stroke-width="1.8"/>
<line x1="671.0" y1="1834.0" x2="671.0" y2="1838.6" stroke="#222" stroke-width="1.8"/>
<line x1="687.5" y1="1834.0" x2="687.5" y2="1838.6" stroke="#222" stroke-width="1.8"/>
<line x1="703.9" y1="1834.0" x2="703.9" y2="1844.2" stroke="#6a6a6a" stroke-width="2.2"/>
<line x1="720.4" y1="1834.0" x2="720.4" y2="1838.6" stroke="#222" stroke-width="1.8"/>
<line x1="736.9" y1="1834.0" x2="736.9" y2="1838.6" stroke="#222" stroke-width="1.8"/>
<line x1="753.4" y1="1834.0" x2="753.4" y2="1838.6" stroke="#222" stroke-width="1.8"/>
<line x1="769.9" y1="1834.0" x2="769.9" y2="1838.6" stroke="#222" stroke-width="1.8"/>
<line x1="786.4" y1="1834.0" x2="786.4" y2="1844.2" stroke="#6a6a6a" stroke-width="2.2"/>
<line x1="802.9" y1="1834.0" x2="802.9" y2="1838.6" stroke="#222" stroke-width="1.8"/>
<line x1="819.4" y1="1834.0" x2="819.4" y2="1838.6" stroke="#222" stroke-width="1.8"/>
<line x1="835.9" y1="1834.0" x2="835.9" y2="1838.6" stroke="#222" stroke-width="1.8"/>
<line x1="852.4" y1="1834.0" x2="852.4" y2="1838.6" stroke="#222" stroke-width="1.8"/>
<line x1="868.8" y1="1834.0" x2="868.8" y2="1844.2" stroke="#6a6a6a" stroke-width="2.2"/>
<line x1="885.3" y1="1834.0" x2="885.3" y2="1838.6" stroke="#222" stroke-width="1.8"/>
<line x1="901.8" y1="1834.0" x2="901.8" y2="1838.6" stroke="#222" stroke-width="1.8"/>
<line x1="918.3" y1="1834.0" x2="918.3" y2="1838.6" stroke="#222" stroke-width="1.8"/>
<line x1="934.8" y1="1834.0" x2="934.8" y2="1838.6" stroke="#222" stroke-width="1.8"/>
<line x1="951.3" y1="1834.0" x2="951.3" y2="1844.2" stroke="#6a6a6a" stroke-width="2.2"/>
<line x1="967.8" y1="1834.0" x2="967.8" y2="1838.6" stroke="#222" stroke-width="1.8"/>
<line x1="984.3" y1="1834.0" x2="984.3" y2="1838.6" stroke="#222" stroke-width="1.8"/>
<line x1="1000.8" y1="1834.0" x2="1000.8" y2="1838.6" stroke="#222" stroke-width="1.8"/>
<line x1="1017.3" y1="1834.0" x2="1017.3" y2="1838.6" stroke="#222" stroke-width="1.8"/>
<line x1="1033.8" y1="1834.0" x2="1033.8" y2="1844.2" stroke="#6a6a6a" stroke-width="2.2"/>
<line x1="1050.2" y1="1834.0" x2="1050.2" y2="1838.6" stroke="#222" stroke-width="1.8"/>
<line x1="1066.7" y1="1834.0" x2="1066.7" y2="1838.6" stroke="#222" stroke-width="1.8"/>
<line x1="1083.2" y1="1834.0" x2="1083.2" y2="1838.6" stroke="#222" stroke-width="1.8"/>
<line x1="1099.7" y1="1834.0" x2="1099.7" y2="1838.6" stroke="#222" stroke-width="1.8"/>
<line x1="1116.2" y1="1834.0" x2="1116.2" y2="1844.2" stroke="#6a6a6a" stroke-width="2.2"/>
<line x1="1132.7" y1="1834.0" x2="1132.7" y2="1838.6" stroke="#222" stroke-width="1.8"/>
<line x1="1149.2" y1="1834.0" x2="1149.2" y2="1838.6" stroke="#222" stroke-width="1.8"/>
<line x1="1165.7" y1="1834.0" x2="1165.7" y2="1838.6" stroke="#222" stroke-width="1.8"/>
<line x1="1182.2" y1="1834.0" x2="1182.2" y2="1838.6" stroke="#222" stroke-width="1.8"/>
<line x1="1198.6" y1="1834.0" x2="1198.6" y2="1844.2" stroke="#6a6a6a" stroke-width="2.2"/>
<line x1="1215.1" y1="1834.0" x2="1215.1" y2="1838.6" stroke="#222" stroke-width="1.8"/>
<line x1="1231.6" y1="1834.0" x2="1231.6" y2="1838.6" stroke="#222" stroke-width="1.8"/>
<line x1="1248.1" y1="1834.0" x2="1248.1" y2="1838.6" stroke="#222" stroke-width="1.8"/>
<line x1="1264.6" y1="1834.0" x2="1264.6" y2="1838.6" stroke="#222" stroke-width="1.8"/>
<line x1="1281.1" y1="1834.0" x2="1281.1" y2="1844.2" stroke="#6a6a6a" stroke-width="2.2"/>
<line x1="1297.6" y1="1834.0" x2="1297.6" y2="1838.6" stroke="#222" stroke-width="1.8"/>
<line x1="1314.1" y1="1834.0" x2="1314.1" y2="1838.6" stroke="#222" stroke-width="1.8"/>
<line x1="1330.6" y1="1834.0" x2="1330.6" y2="1838.6" stroke="#222" stroke-width="1.8"/>
<line x1="1347.1" y1="1834.0" x2="1347.1" y2="1838.6" stroke="#222" stroke-width="1.8"/>
<line x1="1363.5" y1="1834.0" x2="1363.5" y2="1844.2" stroke="#6a6a6a" stroke-width="2.2"/>
<line x1="1380.0" y1="1834.0" x2="1380.0" y2="1838.6" stroke="#222" stroke-width="1.8"/>
<line x1="1396.5" y1="1834.0" x2="1396.5" y2="1838.6" stroke="#222" stroke-width="1.8"/>
<line x1="1413.0" y1="1834.0" x2="1413.0" y2="1838.6" stroke="#222" stroke-width="1.8"/>
<line x1="1429.5" y1="1834.0" x2="1429.5" y2="1838.6" stroke="#222" stroke-width="1.8"/>
<line x1="1446.0" y1="1834.0" x2="1446.0" y2="1844.2" stroke="#6a6a6a" stroke-width="2.2"/>
<line x1="1462.5" y1="1834.0" x2="1462.5" y2="1838.6" stroke="#222" stroke-width="1.8"/>
<line x1="1479.0" y1="1834.0" x2="1479.0" y2="1838.6" stroke="#222" stroke-width="1.8"/>
<line x1="1495.5" y1="1834.0" x2="1495.5" y2="1838.6" stroke="#222" stroke-width="1.8"/>
<line x1="1512.0" y1="1834.0" x2="1512.0" y2="1838.6" stroke="#222" stroke-width="1.8"/>
<line x1="1528.4" y1="1834.0" x2="1528.4" y2="1844.2" stroke="#6a6a6a" stroke-width="2.2"/>
<line x1="1544.9" y1="1834.0" x2="1544.9" y2="1838.6" stroke="#222" stroke-width="1.8"/>
<line x1="1561.4" y1="1834.0" x2="1561.4" y2="1838.6" stroke="#222" stroke-width="1.8"/>
<line x1="1577.9" y1="1834.0" x2="1577.9" y2="1838.6" stroke="#222" stroke-width="1.8"/>
<line x1="1594.4" y1="1834.0" x2="1594.4" y2="1838.6" stroke="#222" stroke-width="1.8"/>
<line x1="1610.9" y1="1834.0" x2="1610.9" y2="1844.2" stroke="#6a6a6a" stroke-width="2.2"/>
<line x1="1627.4" y1="1834.0" x2="1627.4" y2="1838.6" stroke="#222" stroke-width="1.8"/>
<line x1="1643.9" y1="1834.0" x2="1643.9" y2="1838.6" stroke="#222" stroke-width="1.8"/>
<line x1="1660.4" y1="1834.0" x2="1660.4" y2="1838.6" stroke="#222" stroke-width="1.8"/>
<line x1="1676.9" y1="1834.0" x2="1676.9" y2="1838.6" stroke="#222" stroke-width="1.8"/>
<line x1="1693.3" y1="1834.0" x2="1693.3" y2="1844.2" stroke="#6a6a6a" stroke-width="2.2"/>
<line x1="1709.8" y1="1834.0" x2="1709.8" y2="1838.6" stroke="#222" stroke-width="1.8"/>
<line x1="1726.3" y1="1834.0" x2="1726.3" y2="1838.6" stroke="#222" stroke-width="1.8"/>
<line x1="1742.8" y1="1834.0" x2="1742.8" y2="1838.6" stroke="#222" stroke-width="1.8"/>
<line x1="1759.3" y1="1834.0" x2="1759.3" y2="1838.6" stroke="#222" stroke-width="1.8"/>
<line x1="1775.8" y1="1834.0" x2="1775.8" y2="1844.2" stroke="#6a6a6a" stroke-width="2.2"/>
<line x1="1792.3" y1="1834.0" x2="1792.3" y2="1838.6" stroke="#222" stroke-width="1.8"/>
<line x1="1808.8" y1="1834.0" x2="1808.8" y2="1838.6" stroke="#222" stroke-width="1.8"/>
<line x1="1825.3" y1="1834.0" x2="1825.3" y2="1838.6" stroke="#222" stroke-width="1.8"/>
<line x1="1841.8" y1="1834.0" x2="1841.8" y2="1838.6" stroke="#222" stroke-width="1.8"/>
<line x1="1858.2" y1="1834.0" x2="1858.2" y2="1844.2" stroke="#6a6a6a" stroke-width="2.2"/>
<line x1="1874.7" y1="1834.0" x2="1874.7" y2="1838.6" stroke="#222" stroke-width="1.8"/>
<line x1="1891.2" y1="1834.0" x2="1891.2" y2="1838.6" stroke="#222" stroke-width="1.8"/>
<line x1="1907.7" y1="1834.0" x2="1907.7" y2="1838.6" stroke="#222" stroke-width="1.8"/>
<line x1="1924.2" y1="1834.0" x2="1924.2" y2="1838.6" stroke="#222" stroke-width="1.8"/>
<line x1="1940.7" y1="1834.0" x2="1940.7" y2="1844.2" stroke="#6a6a6a" stroke-width="2.2"/>
<line x1="1957.2" y1="1834.0" x2="1957.2" y2="1838.6" stroke="#222" stroke-width="1.8"/>
<line x1="1973.7" y1="1834.0" x2="1973.7" y2="1838.6" stroke="#222" stroke-width="1.8"/>
<line x1="1990.2" y1="1834.0" x2="1990.2" y2="1838.6" stroke="#222" stroke-width="1.8"/>
<line x1="2006.7" y1="1834.0" x2="2006.7" y2="1838.6" stroke="#222" stroke-width="1.8"/>
<line x1="2023.1" y1="1834.0" x2="2023.1" y2="1844.2" stroke="#6a6a6a" stroke-width="2.2"/>
<line x1="2039.6" y1="1834.0" x2="2039.6" y2="1838.6" stroke="#222" stroke-width="1.8"/>
<line x1="2056.1" y1="1834.0" x2="2056.1" y2="1838.6" stroke="#222" stroke-width="1.8"/>
<line x1="2072.6" y1="1834.0" x2="2072.6" y2="1838.6" stroke="#222" stroke-width="1.8"/>
<line x1="2089.1" y1="1834.0" x2="2089.1" y2="1838.6" stroke="#222" stroke-width="1.8"/>
<line x1="2105.6" y1="1834.0" x2="2105.6" y2="1844.2" stroke="#6a6a6a" stroke-width="2.2"/>
<line x1="2122.1" y1="1834.0" x2="2122.1" y2="1838.6" stroke="#222" stroke-width="1.8"/>
<line x1="2138.6" y1="1834.0" x2="2138.6" y2="1838.6" stroke="#222" stroke-width="1.8"/>
<line x1="2155.1" y1="1834.0" x2="2155.1" y2="1838.6" stroke="#222" stroke-width="1.8"/>
<line x1="2171.6" y1="1834.0" x2="2171.6" y2="1838.6" stroke="#222" stroke-width="1.8"/>
<line x1="2188.1" y1="1834.0" x2="2188.1" y2="1844.2" stroke="#6a6a6a" stroke-width="2.2"/>
<line x1="2204.5" y1="1834.0" x2="2204.5" y2="1838.6" stroke="#222" stroke-width="1.8"/>
<line x1="2221.0" y1="1834.0" x2="2221.0" y2="1838.6" stroke="#222" stroke-width="1.8"/>
<line x1="2237.5" y1="1834.0" x2="2237.5" y2="1838.6" stroke="#222" stroke-width="1.8"/>
<line x1="2254.0" y1="1834.0" x2="2254.0" y2="1838.6" stroke="#222" stroke-width="1.8"/>
<line x1="2270.5" y1="1834.0" x2="2270.5" y2="1844.2" stroke="#6a6a6a" stroke-width="2.2"/>
<line x1="2287.0" y1="1834.0" x2="2287.0" y2="1838.6" stroke="#222" stroke-width="1.8"/>
<line x1="2303.5" y1="1834.0" x2="2303.5" y2="1838.6" stroke="#222" stroke-width="1.8"/>
<line x1="2320.0" y1="1834.0" x2="2320.0" y2="1838.6" stroke="#222" stroke-width="1.8"/>
<line x1="2336.5" y1="1834.0" x2="2336.5" y2="1838.6" stroke="#222" stroke-width="1.8"/>
<line x1="2352.9" y1="1834.0" x2="2352.9" y2="1844.2" stroke="#6a6a6a" stroke-width="2.2"/>
<line x1="2369.4" y1="1834.0" x2="2369.4" y2="1838.6" stroke="#222" stroke-width="1.8"/>
<line x1="2385.9" y1="1834.0" x2="2385.9" y2="1838.6" stroke="#222" stroke-width="1.8"/>
<line x1="2402.4" y1="1834.0" x2="2402.4" y2="1838.6" stroke="#222" stroke-width="1.8"/>
<line x1="2418.9" y1="1834.0" x2="2418.9" y2="1838.6" stroke="#222" stroke-width="1.8"/>
<line x1="2435.4" y1="1834.0" x2="2435.4" y2="1844.2" stroke="#6a6a6a" stroke-width="2.2"/>
<line x1="2451.9" y1="1834.0" x2="2451.9" y2="1838.6" stroke="#222" stroke-width="1.8"/>
<line x1="2468.4" y1="1834.0" x2="2468.4" y2="1838.6" stroke="#222" stroke-width="1.8"/>
<line x1="2484.9" y1="1834.0" x2="2484.9" y2="1838.6" stroke="#222" stroke-width="1.8"/>
<line x1="2501.4" y1="1834.0" x2="2501.4" y2="1838.6" stroke="#222" stroke-width="1.8"/>
<line x1="2517.8" y1="1834.0" x2="2517.8" y2="1844.2" stroke="#6a6a6a" stroke-width="2.2"/>
<line x1="2534.3" y1="1834.0" x2="2534.3" y2="1838.6" stroke="#222" stroke-width="1.8"/>
<line x1="2550.8" y1="1834.0" x2="2550.8" y2="1838.6" stroke="#222" stroke-width="1.8"/>
<line x1="2567.3" y1="1834.0" x2="2567.3" y2="1838.6" stroke="#222" stroke-width="1.8"/>
<line x1="2583.8" y1="1834.0" x2="2583.8" y2="1838.6" stroke="#222" stroke-width="1.8"/>
<line x1="2600.3" y1="1834.0" x2="2600.3" y2="1844.2" stroke="#6a6a6a" stroke-width="2.2"/>
<line x1="2616.8" y1="1834.0" x2="2616.8" y2="1838.6" stroke="#222" stroke-width="1.8"/>
<line x1="2633.3" y1="1834.0" x2="2633.3" y2="1838.6" stroke="#222" stroke-width="1.8"/>
<line x1="2649.8" y1="1834.0" x2="2649.8" y2="1838.6" stroke="#222" stroke-width="1.8"/>
<line x1="2666.3" y1="1834.0" x2="2666.3" y2="1838.6" stroke="#222" stroke-width="1.8"/>
<line x1="2682.8" y1="1834.0" x2="2682.8" y2="1844.2" stroke="#6a6a6a" stroke-width="2.2"/>
<line x1="2699.2" y1="1834.0" x2="2699.2" y2="1838.6" stroke="#222" stroke-width="1.8"/>
<line x1="2715.7" y1="1834.0" x2="2715.7" y2="1838.6" stroke="#222" stroke-width="1.8"/>
<line x1="2732.2" y1="1834.0" x2="2732.2" y2="1838.6" stroke="#222" stroke-width="1.8"/>
<line x1="2748.7" y1="1834.0" x2="2748.7" y2="1838.6" stroke="#222" stroke-width="1.8"/>
<line x1="2765.2" y1="1834.0" x2="2765.2" y2="1844.2" stroke="#6a6a6a" stroke-width="2.2"/>
<line x1="2781.7" y1="1834.0" x2="2781.7" y2="1838.6" stroke="#222" stroke-width="1.8"/>
<line x1="2798.2" y1="1834.0" x2="2798.2" y2="1838.6" stroke="#222" stroke-width="1.8"/>
<line x1="2814.7" y1="1834.0" x2="2814.7" y2="1838.6" stroke="#222" stroke-width="1.8"/>
<line x1="2831.2" y1="1834.0" x2="2831.2" y2="1838.6" stroke="#222" stroke-width="1.8"/>
<line x1="2847.7" y1="1834.0" x2="2847.7" y2="1844.2" stroke="#6a6a6a" stroke-width="2.2"/>
<line x1="2864.1" y1="1834.0" x2="2864.1" y2="1838.6" stroke="#222" stroke-width="1.8"/>
<line x1="2880.6" y1="1834.0" x2="2880.6" y2="1838.6" stroke="#222" stroke-width="1.8"/>
<line x1="2897.1" y1="1834.0" x2="2897.1" y2="1838.6" stroke="#222" stroke-width="1.8"/>
<line x1="2913.6" y1="1834.0" x2="2913.6" y2="1838.6" stroke="#222" stroke-width="1.8"/>
<line x1="2930.1" y1="1834.0" x2="2930.1" y2="1844.2" stroke="#6a6a6a" stroke-width="2.2"/>
<line x1="2946.6" y1="1834.0" x2="2946.6" y2="1838.6" stroke="#222" stroke-width="1.8"/>
<line x1="2963.1" y1="1834.0" x2="2963.1" y2="1838.6" stroke="#222" stroke-width="1.8"/>
<line x1="2979.6" y1="1834.0" x2="2979.6" y2="1838.6" stroke="#222" stroke-width="1.8"/>
<line x1="2996.1" y1="1834.0" x2="2996.1" y2="1838.6" stroke="#222" stroke-width="1.8"/>
<line x1="3012.5" y1="1834.0" x2="3012.5" y2="1844.2" stroke="#6a6a6a" stroke-width="2.2"/>
<line x1="3029.0" y1="1834.0" x2="3029.0" y2="1838.6" stroke="#222" stroke-width="1.8"/>
<line x1="3045.5" y1="1834.0" x2="3045.5" y2="1838.6" stroke="#222" stroke-width="1.8"/>
<line x1="3062.0" y1="1834.0" x2="3062.0" y2="1838.6" stroke="#222" stroke-width="1.8"/>
<line x1="3078.5" y1="1834.0" x2="3078.5" y2="1838.6" stroke="#222" stroke-width="1.8"/>
<line x1="3095.0" y1="1834.0" x2="3095.0" y2="1844.2" stroke="#6a6a6a" stroke-width="2.2"/>
<line x1="3111.5" y1="1834.0" x2="3111.5" y2="1838.6" stroke="#222" stroke-width="1.8"/>
<line x1="3128.0" y1="1834.0" x2="3128.0" y2="1838.6" stroke="#222" stroke-width="1.8"/>
<line x1="3144.5" y1="1834.0" x2="3144.5" y2="1838.6" stroke="#222" stroke-width="1.8"/>
<line x1="3161.0" y1="1834.0" x2="3161.0" y2="1838.6" stroke="#222" stroke-width="1.8"/>
<line x1="3177.4" y1="1834.0" x2="3177.4" y2="1844.2" stroke="#6a6a6a" stroke-width="2.2"/>
<text x="126.8" y="1866.7" font-size="23.5" fill="#111" text-anchor="middle" textLength="21.6" lengthAdjust="spacingAndGlyphs" stroke="#ffffff" stroke-width="0.25">50</text>
<text x="209.2" y="1866.7" font-size="23.5" fill="#111" text-anchor="middle" textLength="21.6" lengthAdjust="spacingAndGlyphs" stroke="#ffffff" stroke-width="0.25">60</text>
<text x="291.7" y="1866.7" font-size="23.5" fill="#111" text-anchor="middle" textLength="21.6" lengthAdjust="spacingAndGlyphs" stroke="#ffffff" stroke-width="0.25">70</text>
<text x="374.1" y="1866.7" font-size="23.5" fill="#111" text-anchor="middle" textLength="21.6" lengthAdjust="spacingAndGlyphs" stroke="#ffffff" stroke-width="0.25">80</text>
<text x="456.6" y="1866.7" font-size="23.5" fill="#111" text-anchor="middle" textLength="21.6" lengthAdjust="spacingAndGlyphs" stroke="#ffffff" stroke-width="0.25">90</text>
<text x="539.0" y="1866.7" font-size="23.5" fill="#111" text-anchor="middle" textLength="32.7" lengthAdjust="spacingAndGlyphs" stroke="#ffffff" stroke-width="0.25">100</text>
<text x="621.5" y="1866.7" font-size="23.5" fill="#111" text-anchor="middle" textLength="32.7" lengthAdjust="spacingAndGlyphs" stroke="#ffffff" stroke-width="0.25">110</text>
<text x="703.9" y="1866.7" font-size="23.5" fill="#111" text-anchor="middle" textLength="32.7" lengthAdjust="spacingAndGlyphs" stroke="#ffffff" stroke-width="0.25">120</text>
<text x="786.4" y="1866.7" font-size="23.5" fill="#111" text-anchor="middle" textLength="32.7" lengthAdjust="spacingAndGlyphs" stroke="#ffffff" stroke-width="0.25">130</text>
<text x="868.8" y="1866.7" font-size="23.5" fill="#111" text-anchor="middle" textLength="32.7" lengthAdjust="spacingAndGlyphs" stroke="#ffffff" stroke-width="0.25">140</text>
<text x="951.3" y="1866.7" font-size="23.5" fill="#111" text-anchor="middle" textLength="32.7" lengthAdjust="spacingAndGlyphs" stroke="#ffffff" stroke-width="0.25">150</text>
<text x="1033.8" y="1866.7" font-size="23.5" fill="#111" text-anchor="middle" textLength="32.7" lengthAdjust="spacingAndGlyphs" stroke="#ffffff" stroke-width="0.25">160</text>
<text x="1116.2" y="1866.7" font-size="23.5" fill="#111" text-anchor="middle" textLength="32.7" lengthAdjust="spacingAndGlyphs" stroke="#ffffff" stroke-width="0.25">170</text>
<text x="1198.6" y="1866.7" font-size="23.5" fill="#111" text-anchor="middle" textLength="32.7" lengthAdjust="spacingAndGlyphs" stroke="#ffffff" stroke-width="0.25">180</text>
<text x="1281.1" y="1866.7" font-size="23.5" fill="#111" text-anchor="middle" textLength="32.7" lengthAdjust="spacingAndGlyphs" stroke="#ffffff" stroke-width="0.25">190</text>
<text x="1363.5" y="1866.7" font-size="23.5" fill="#111" text-anchor="middle" textLength="32.7" lengthAdjust="spacingAndGlyphs" stroke="#ffffff" stroke-width="0.25">200</text>
<text x="1446.0" y="1866.7" font-size="23.5" fill="#111" text-anchor="middle" textLength="32.7" lengthAdjust="spacingAndGlyphs" stroke="#ffffff" stroke-width="0.25">210</text>
<text x="1528.4" y="1866.7" font-size="23.5" fill="#111" text-anchor="middle" textLength="32.7" lengthAdjust="spacingAndGlyphs" stroke="#ffffff" stroke-width="0.25">220</text>
<text x="1610.9" y="1866.7" font-size="23.5" fill="#111" text-anchor="middle" textLength="32.7" lengthAdjust="spacingAndGlyphs" stroke="#ffffff" stroke-width="0.25">230</text>
<text x="1693.3" y="1866.7" font-size="23.5" fill="#111" text-anchor="middle" textLength="32.7" lengthAdjust="spacingAndGlyphs" stroke="#ffffff" stroke-width="0.25">240</text>
<text x="1775.8" y="1866.7" font-size="23.5" fill="#111" text-anchor="middle" textLength="32.7" lengthAdjust="spacingAndGlyphs" stroke="#ffffff" stroke-width="0.25">250</text>
<text x="1858.2" y="1866.7" font-size="23.5" fill="#111" text-anchor="middle" textLength="32.7" lengthAdjust="spacingAndGlyphs" stroke="#ffffff" stroke-width="0.25">260</text>
<text x="1940.7" y="1866.7" font-size="23.5" fill="#111" text-anchor="middle" textLength="32.7" lengthAdjust="spacingAndGlyphs" stroke="#ffffff" stroke-width="0.25">270</text>
<text x="2023.1" y="1866.7" font-size="23.5" fill="#111" text-anchor="middle" textLength="32.7" lengthAdjust="spacingAndGlyphs" stroke="#ffffff" stroke-width="0.25">280</text>
<text x="2105.6" y="1866.7" font-size="23.5" fill="#111" text-anchor="middle" textLength="32.7" lengthAdjust="spacingAndGlyphs" stroke="#ffffff" stroke-width="0.25">290</text>
<text x="2188.1" y="1866.7" font-size="23.5" fill="#111" text-anchor="middle" textLength="32.7" lengthAdjust="spacingAndGlyphs" stroke="#ffffff" stroke-width="0.25">300</text>
<text x="2270.5" y="1866.7" font-size="23.5" fill="#111" text-anchor="middle" textLength="32.7" lengthAdjust="spacingAndGlyphs" stroke="#ffffff" stroke-width="0.25">310</text>
<text x="2352.9" y="1866.7" font-size="23.5" fill="#111" text-anchor="middle" textLength="32.7" lengthAdjust="spacingAndGlyphs" stroke="#ffffff" stroke-width="0.25">320</text>
<text x="2435.4" y="1866.7" font-size="23.5" fill="#111" text-anchor="middle" textLength="32.7" lengthAdjust="spacingAndGlyphs" stroke="#ffffff" stroke-width="0.25">330</text>
<text x="2517.8" y="1866.7" font-size="23.5" fill="#111" text-anchor="middle" textLength="32.7" lengthAdjust="spacingAndGlyphs" stroke="#ffffff" stroke-width="0.25">340</text>
<text x="2600.3" y="1866.7" font-size="23.5" fill="#111" text-anchor="middle" textLength="32.7" lengthAdjust="spacingAndGlyphs" stroke="#ffffff" stroke-width="0.25">350</text>
<text x="2682.8" y="1866.7" font-size="23.5" fill="#111" text-anchor="middle" textLength="32.7" lengthAdjust="spacingAndGlyphs" stroke="#ffffff" stroke-width="0.25">360</text>
<text x="2765.2" y="1866.7" font-size="23.5" fill="#111" text-anchor="middle" textLength="32.7" lengthAdjust="spacingAndGlyphs" stroke="#ffffff" stroke-width="0.25">370</text>
<text x="2847.7" y="1866.7" font-size="23.5" fill="#111" text-anchor="middle" textLength="32.7" lengthAdjust="spacingAndGlyphs" stroke="#ffffff" stroke-width="0.25">380</text>
<text x="2930.1" y="1866.7" font-size="23.5" fill="#111" text-anchor="middle" textLength="32.7" lengthAdjust="spacingAndGlyphs" stroke="#ffffff" stroke-width="0.25">390</text>
<text x="3012.5" y="1866.7" font-size="23.5" fill="#111" text-anchor="middle" textLength="32.7" lengthAdjust="spacingAndGlyphs" stroke="#ffffff" stroke-width="0.25">400</text>
<text x="3095.0" y="1866.7" font-size="23.5" fill="#111" text-anchor="middle" textLength="32.7" lengthAdjust="spacingAndGlyphs" stroke="#ffffff" stroke-width="0.25">410</text>
<text x="3177.4" y="1866.7" font-size="23.5" fill="#111" text-anchor="middle" textLength="32.7" lengthAdjust="spacingAndGlyphs" stroke="#ffffff" stroke-width="0.25">420</text>
<line x1="128.0" y1="1815.0" x2="128.0" y2="1833.5" stroke="#ff00ff" stroke-width="2"/>
<line x1="135.6" y1="1799.7" x2="135.6" y2="1833.5" stroke="#ff00ff" stroke-width="2"/>
<line x1="143.0" y1="1824.0" x2="143.0" y2="1833.5" stroke="#ff00ff" stroke-width="2"/>
<line x1="152.0" y1="1830.0" x2="152.0" y2="1833.5" stroke="#ff00ff" stroke-width="2"/>
<line x1="160.0" y1="1832.0" x2="160.0" y2="1833.5" stroke="#ff00ff" stroke-width="2"/>
<line x1="169.0" y1="1832.0" x2="169.0" y2="1833.5" stroke="#ff00ff" stroke-width="2"/>
<line x1="176.4" y1="1831.0" x2="176.4" y2="1833.5" stroke="#ff00ff" stroke-width="2"/>
<line x1="180.0" y1="1831.0" x2="180.0" y2="1833.5" stroke="#ff00ff" stroke-width="2"/>
<line x1="189.8" y1="1811.0" x2="189.8" y2="1833.5" stroke="#ff00ff" stroke-width="2"/>
<line x1="199.0" y1="1831.0" x2="199.0" y2="1833.5" stroke="#ff00ff" stroke-width="2"/>
<line x1="207.0" y1="1830.0" x2="207.0" y2="1833.5" stroke="#ff00ff" stroke-width="2"/>
<line x1="212.0" y1="1830.0" x2="212.0" y2="1833.5" stroke="#ff00ff" stroke-width="2"/>
<line x1="218.0" y1="1827.6" x2="218.0" y2="1833.5" stroke="#ff00ff" stroke-width="2"/>
<line x1="225.7" y1="1811.0" x2="225.7" y2="1833.5" stroke="#ff00ff" stroke-width="2"/>
<line x1="234.9" y1="1785.7" x2="234.9" y2="1833.5" stroke="#ff00ff" stroke-width="2"/>
<line x1="242.2" y1="1826.0" x2="242.2" y2="1833.5" stroke="#ff00ff" stroke-width="2"/>
<line x1="251.8" y1="1816.6" x2="251.8" y2="1833.5" stroke="#ff00ff" stroke-width="2"/>
<line x1="259.0" y1="1831.0" x2="259.0" y2="1833.5" stroke="#ff00ff" stroke-width="2"/>
<line x1="268.7" y1="1831.0" x2="268.7" y2="1833.5" stroke="#ff00ff" stroke-width="2"/>
<line x1="276.0" y1="1831.0" x2="276.0" y2="1833.5" stroke="#ff00ff" stroke-width="2"/>
<line x1="283.5" y1="1827.6" x2="283.5" y2="1833.5" stroke="#ff00ff" stroke-width="2"/>
<line x1="289.0" y1="1827.6" x2="289.0" y2="1833.5" stroke="#ff00ff" stroke-width="2"/>
<line x1="292.7" y1="1822.0" x2="292.7" y2="1833.5" stroke="#ff00ff" stroke-width="2"/>
<line x1="297.0" y1="1826.0" x2="297.0" y2="1833.5" stroke="#ff00ff" stroke-width="2"/>
<line x1="300.4" y1="1818.6" x2="300.4" y2="1833.5" stroke="#ff00ff" stroke-width="2"/>
<line x1="309.6" y1="1831.0" x2="309.6" y2="1833.5" stroke="#ff00ff" stroke-width="2"/>
<line x1="317.4" y1="1831.0" x2="317.4" y2="1833.5" stroke="#ff00ff" stroke-width="2"/>
<line x1="325.0" y1="1813.0" x2="325.0" y2="1833.5" stroke="#ff00ff" stroke-width="2"/>
<line x1="334.0" y1="1816.6" x2="334.0" y2="1833.5" stroke="#ff00ff" stroke-width="2"/>
<line x1="342.0" y1="1822.0" x2="342.0" y2="1833.5" stroke="#ff00ff" stroke-width="2"/>
<line x1="349.0" y1="1820.0" x2="349.0" y2="1833.5" stroke="#ff00ff" stroke-width="2"/>
<line x1="358.9" y1="1829.0" x2="358.9" y2="1833.5" stroke="#ff00ff" stroke-width="2"/>
<line x1="366.4" y1="1831.0" x2="366.4" y2="1833.5" stroke="#ff00ff" stroke-width="2"/>
<line x1="375.4" y1="1831.0" x2="375.4" y2="1833.5" stroke="#ff00ff" stroke-width="2"/>
<line x1="382.8" y1="1831.0" x2="382.8" y2="1833.5" stroke="#ff00ff" stroke-width="2"/>
<line x1="391.7" y1="1831.0" x2="391.7" y2="1833.5" stroke="#ff00ff" stroke-width="2"/>
<line x1="399.7" y1="1831.0" x2="399.7" y2="1833.5" stroke="#ff00ff" stroke-width="2"/>
<line x1="407.7" y1="1831.0" x2="407.7" y2="1833.5" stroke="#ff00ff" stroke-width="2"/>
<line x1="415.3" y1="1829.0" x2="415.3" y2="1833.5" stroke="#ff00ff" stroke-width="2"/>
<line x1="424.0" y1="1822.0" x2="424.0" y2="1833.5" stroke="#ff00ff" stroke-width="2"/>
<line x1="431.6" y1="1820.0" x2="431.6" y2="1833.5" stroke="#ff00ff" stroke-width="2"/>
<line x1="440.6" y1="1827.6" x2="440.6" y2="1833.5" stroke="#ff00ff" stroke-width="2"/>
<line x1="448.6" y1="1805.0" x2="448.6" y2="1833.5" stroke="#ff00ff" stroke-width="2"/>
<line x1="456.0" y1="1829.6" x2="456.0" y2="1833.5" stroke="#ff00ff" stroke-width="2"/>
<line x1="465.5" y1="1826.0" x2="465.5" y2="1833.5" stroke="#ff00ff" stroke-width="2"/>
<line x1="474.5" y1="1831.0" x2="474.5" y2="1833.5" stroke="#ff00ff" stroke-width="2"/>
<line x1="482.5" y1="1831.0" x2="482.5" y2="1833.5" stroke="#ff00ff" stroke-width="2"/>
<line x1="490.4" y1="1831.0" x2="490.4" y2="1833.5" stroke="#ff00ff" stroke-width="2"/>
<line x1="499.0" y1="1831.9" x2="499.0" y2="1833.5" stroke="#ff00ff" stroke-width="2"/>
<line x1="507.0" y1="1831.9" x2="507.0" y2="1833.5" stroke="#ff00ff" stroke-width="2"/>
<line x1="514.3" y1="1831.9" x2="514.3" y2="1833.5" stroke="#ff00ff" stroke-width="2"/>
<line x1="523.5" y1="1829.9" x2="523.5" y2="1833.5" stroke="#ff00ff" stroke-width="2"/>
<line x1="530.9" y1="1829.9" x2="530.9" y2="1833.5" stroke="#ff00ff" stroke-width="2"/>
<line x1="538.8" y1="1831.9" x2="538.8" y2="1833.5" stroke="#ff00ff" stroke-width="2"/>
<line x1="547.8" y1="1829.9" x2="547.8" y2="1833.5" stroke="#ff00ff" stroke-width="2"/>
<line x1="555.4" y1="1825.9" x2="555.4" y2="1833.5" stroke="#ff00ff" stroke-width="2"/>
<line x1="564.8" y1="1831.9" x2="564.8" y2="1833.5" stroke="#ff00ff" stroke-width="2"/>
<line x1="572.7" y1="1831.9" x2="572.7" y2="1833.5" stroke="#ff00ff" stroke-width="2"/>
<line x1="581.7" y1="1831.9" x2="581.7" y2="1833.5" stroke="#ff00ff" stroke-width="2"/>
<line x1="587.3" y1="1831.9" x2="587.3" y2="1833.5" stroke="#ff00ff" stroke-width="2"/>
<line x1="590.7" y1="1831.9" x2="590.7" y2="1833.5" stroke="#ff00ff" stroke-width="2"/>
<line x1="597.7" y1="1831.9" x2="597.7" y2="1833.5" stroke="#ff00ff" stroke-width="2"/>
<line x1="605.6" y1="1831.9" x2="605.6" y2="1833.5" stroke="#ff00ff" stroke-width="2"/>
<line x1="613.6" y1="1831.9" x2="613.6" y2="1833.5" stroke="#ff00ff" stroke-width="2"/>
<line x1="621.6" y1="1831.9" x2="621.6" y2="1833.5" stroke="#ff00ff" stroke-width="2"/>
<line x1="630.6" y1="1829.9" x2="630.6" y2="1833.5" stroke="#ff00ff" stroke-width="2"/>
<line x1="638.5" y1="1831.9" x2="638.5" y2="1833.5" stroke="#ff00ff" stroke-width="2"/>
<line x1="647.1" y1="1820.3" x2="647.1" y2="1833.5" stroke="#ff00ff" stroke-width="2"/>
<line x1="655.1" y1="1825.9" x2="655.1" y2="1833.5" stroke="#ff00ff" stroke-width="2"/>
<line x1="664.0" y1="1672.4" x2="664.0" y2="1833.5" stroke="#ff00ff" stroke-width="2"/>
<line x1="671.8" y1="1812.9" x2="671.8" y2="1833.5" stroke="#ff00ff" stroke-width="2"/>
<line x1="679.0" y1="1829.9" x2="679.0" y2="1833.5" stroke="#ff00ff" stroke-width="2"/>
<line x1="688.4" y1="1831.9" x2="688.4" y2="1833.5" stroke="#ff00ff" stroke-width="2"/>
<line x1="697.9" y1="1831.9" x2="697.9" y2="1833.5" stroke="#ff00ff" stroke-width="2"/>
<line x1="704.3" y1="1831.9" x2="704.3" y2="1833.5" stroke="#ff00ff" stroke-width="2"/>
<line x1="712.9" y1="1831.9" x2="712.9" y2="1833.5" stroke="#ff00ff" stroke-width="2"/>
<line x1="722.3" y1="1831.9" x2="722.3" y2="1833.5" stroke="#ff00ff" stroke-width="2"/>
<line x1="728.2" y1="1831.9" x2="728.2" y2="1833.5" stroke="#ff00ff" stroke-width="2"/>
<line x1="739.2" y1="1831.9" x2="739.2" y2="1833.5" stroke="#ff00ff" stroke-width="2"/>
<line x1="745.2" y1="1831.9" x2="745.2" y2="1833.5" stroke="#ff00ff" stroke-width="2"/>
<line x1="754.2" y1="1825.9" x2="754.2" y2="1833.5" stroke="#ff00ff" stroke-width="2"/>
<line x1="763.5" y1="1829.9" x2="763.5" y2="1833.5" stroke="#ff00ff" stroke-width="2"/>
<line x1="771.1" y1="1825.9" x2="771.1" y2="1833.5" stroke="#ff00ff" stroke-width="2"/>
<line x1="778.7" y1="1827.9" x2="778.7" y2="1833.5" stroke="#ff00ff" stroke-width="2"/>
<line x1="788.0" y1="1831.9" x2="788.0" y2="1833.5" stroke="#ff00ff" stroke-width="2"/>
<line x1="795.0" y1="1829.9" x2="795.0" y2="1833.5" stroke="#ff00ff" stroke-width="2"/>
<line x1="803.0" y1="1831.9" x2="803.0" y2="1833.5" stroke="#ff00ff" stroke-width="2"/>
<line x1="812.0" y1="1831.9" x2="812.0" y2="1833.5" stroke="#ff00ff" stroke-width="2"/>
<line x1="820.0" y1="1831.9" x2="820.0" y2="1833.5" stroke="#ff00ff" stroke-width="2"/>
<line x1="828.9" y1="1831.9" x2="828.9" y2="1833.5" stroke="#ff00ff" stroke-width="2"/>
<line x1="837.9" y1="1831.9" x2="837.9" y2="1833.5" stroke="#ff00ff" stroke-width="2"/>
<line x1="844.5" y1="1831.9" x2="844.5" y2="1833.5" stroke="#ff00ff" stroke-width="2"/>
<line x1="853.2" y1="1829.9" x2="853.2" y2="1833.5" stroke="#ff00ff" stroke-width="2"/>
<line x1="861.2" y1="1807.5" x2="861.2" y2="1833.5" stroke="#ff00ff" stroke-width="2"/>
<line x1="870.4" y1="1825.9" x2="870.4" y2="1833.5" stroke="#ff00ff" stroke-width="2"/>
<line x1="878.2" y1="1598.8" x2="878.2" y2="1833.5" stroke="#ff00ff" stroke-width="2"/>
<line x1="887.1" y1="1582.3" x2="887.1" y2="1833.5" stroke="#ff00ff" stroke-width="2"/>
<line x1="895.1" y1="1805.0" x2="895.1" y2="1833.5" stroke="#ff00ff" stroke-width="2"/>
<line x1="902.3" y1="1829.9" x2="902.3" y2="1833.5" stroke="#ff00ff" stroke-width="2"/>
<line x1="911.6" y1="1831.9" x2="911.6" y2="1833.5" stroke="#ff00ff" stroke-width="2"/>
<line x1="916.6" y1="1831.9" x2="916.6" y2="1833.5" stroke="#ff00ff" stroke-width="2"/>
<line x1="926.6" y1="1831.9" x2="926.6" y2="1833.5" stroke="#ff00ff" stroke-width="2"/>
<line x1="935.6" y1="1831.9" x2="935.6" y2="1833.5" stroke="#ff00ff" stroke-width="2"/>
<line x1="944.2" y1="1831.9" x2="944.2" y2="1833.5" stroke="#ff00ff" stroke-width="2"/>
<line x1="962.1" y1="1831.9" x2="962.1" y2="1833.5" stroke="#ff00ff" stroke-width="2"/>
<line x1="968.1" y1="1831.9" x2="968.1" y2="1833.5" stroke="#ff00ff" stroke-width="2"/>
<line x1="977.4" y1="1831.9" x2="977.4" y2="1833.5" stroke="#ff00ff" stroke-width="2"/>
<line x1="986.4" y1="1831.9" x2="986.4" y2="1833.5" stroke="#ff00ff" stroke-width="2"/>
<line x1="992.5" y1="1831.9" x2="992.5" y2="1833.5" stroke="#ff00ff" stroke-width="2"/>
<line x1="999.5" y1="1831.9" x2="999.5" y2="1833.5" stroke="#ff00ff" stroke-width="2"/>
<line x1="1006.5" y1="1831.9" x2="1006.5" y2="1833.5" stroke="#ff00ff" stroke-width="2"/>
<line x1="1013.5" y1="1831.9" x2="1013.5" y2="1833.5" stroke="#ff00ff" stroke-width="2"/>
<line x1="1020.5" y1="1831.9" x2="1020.5" y2="1833.5" stroke="#ff00ff" stroke-width="2"/>
<line x1="1027.5" y1="1831.9" x2="1027.5" y2="1833.5" stroke="#ff00ff" stroke-width="2"/>
<line x1="1034.5" y1="1831.9" x2="1034.5" y2="1833.5" stroke="#ff00ff" stroke-width="2"/>
<line x1="1041.5" y1="1831.9" x2="1041.5" y2="1833.5" stroke="#ff00ff" stroke-width="2"/>
<line x1="1048.5" y1="1831.9" x2="1048.5" y2="1833.5" stroke="#ff00ff" stroke-width="2"/>
<line x1="1055.5" y1="1831.9" x2="1055.5" y2="1833.5" stroke="#ff00ff" stroke-width="2"/>
<line x1="1062.5" y1="1831.9" x2="1062.5" y2="1833.5" stroke="#ff00ff" stroke-width="2"/>
<line x1="1069.5" y1="1831.9" x2="1069.5" y2="1833.5" stroke="#ff00ff" stroke-width="2"/>
<line x1="1076.5" y1="1831.9" x2="1076.5" y2="1833.5" stroke="#ff00ff" stroke-width="2"/>
<line x1="1083.5" y1="1831.9" x2="1083.5" y2="1833.5" stroke="#ff00ff" stroke-width="2"/>
<line x1="1090.5" y1="1831.9" x2="1090.5" y2="1833.5" stroke="#ff00ff" stroke-width="2"/>
<line x1="1097.5" y1="1831.9" x2="1097.5" y2="1833.5" stroke="#ff00ff" stroke-width="2"/>
<line x1="1104.5" y1="1831.9" x2="1104.5" y2="1833.5" stroke="#ff00ff" stroke-width="2"/>
<line x1="1111.5" y1="1831.9" x2="1111.5" y2="1833.5" stroke="#ff00ff" stroke-width="2"/>
<line x1="1118.5" y1="1831.9" x2="1118.5" y2="1833.5" stroke="#ff00ff" stroke-width="2"/>
<line x1="1125.5" y1="1831.9" x2="1125.5" y2="1833.5" stroke="#ff00ff" stroke-width="2"/>
<line x1="1132.5" y1="1831.9" x2="1132.5" y2="1833.5" stroke="#ff00ff" stroke-width="2"/>
<line x1="1139.5" y1="1831.9" x2="1139.5" y2="1833.5" stroke="#ff00ff" stroke-width="2"/>
<line x1="1146.5" y1="1831.9" x2="1146.5" y2="1833.5" stroke="#ff00ff" stroke-width="2"/>
<line x1="1153.5" y1="1831.9" x2="1153.5" y2="1833.5" stroke="#ff00ff" stroke-width="2"/>
<line x1="1160.5" y1="1831.9" x2="1160.5" y2="1833.5" stroke="#ff00ff" stroke-width="2"/>
<line x1="1167.5" y1="1831.9" x2="1167.5" y2="1833.5" stroke="#ff00ff" stroke-width="2"/>
<line x1="1174.5" y1="1831.9" x2="1174.5" y2="1833.5" stroke="#ff00ff" stroke-width="2"/>
<line x1="1181.5" y1="1831.9" x2="1181.5" y2="1833.5" stroke="#ff00ff" stroke-width="2"/>
<line x1="1188.5" y1="1831.9" x2="1188.5" y2="1833.5" stroke="#ff00ff" stroke-width="2"/>
<line x1="1195.5" y1="1831.9" x2="1195.5" y2="1833.5" stroke="#ff00ff" stroke-width="2"/>
<line x1="1202.5" y1="1831.9" x2="1202.5" y2="1833.5" stroke="#ff00ff" stroke-width="2"/>
<line x1="1273.0" y1="1831.9" x2="1273.0" y2="1833.5" stroke="#ff00ff" stroke-width="2"/>
<line x1="1472.0" y1="1831.9" x2="1472.0" y2="1833.5" stroke="#ff00ff" stroke-width="2"/>
<line x1="1487.7" y1="1831.9" x2="1487.7" y2="1833.5" stroke="#ff00ff" stroke-width="2"/>
<line x1="1739.0" y1="1831.9" x2="1739.0" y2="1833.5" stroke="#ff00ff" stroke-width="2"/>
<line x1="1787.0" y1="1831.9" x2="1787.0" y2="1833.5" stroke="#ff00ff" stroke-width="2"/>
<line x1="1823.0" y1="1831.9" x2="1823.0" y2="1833.5" stroke="#ff00ff" stroke-width="2"/>
<line x1="2463.7" y1="1831.9" x2="2463.7" y2="1833.5" stroke="#ff00ff" stroke-width="2"/>
<text x="111.6" y="1786.7" font-size="23.5" fill="#2a2aff" textLength="48.9" lengthAdjust="spacingAndGlyphs" stroke="#ffffff" stroke-width="0.25">51.09</text>
<text x="208.3" y="1771.2" font-size="23.5" fill="#2a2aff" textLength="49.9" lengthAdjust="spacingAndGlyphs" stroke="#ffffff" stroke-width="0.25">63.08</text>
<text x="225.3" y="1801.7" font-size="23.5" fill="#2a2aff" textLength="49.8" lengthAdjust="spacingAndGlyphs" stroke="#ffffff" stroke-width="0.25">65.08</text>
<text x="301.0" y="1799.7" font-size="23.5" fill="#2a2aff" textLength="48.9" lengthAdjust="spacingAndGlyphs" stroke="#ffffff" stroke-width="0.25">74.06</text>
<text x="423.6" y="1791.7" font-size="23.5" fill="#2a2aff" textLength="49.9" lengthAdjust="spacingAndGlyphs" stroke="#ffffff" stroke-width="0.25">89.08</text>
<text x="635.0" y="1657.0" font-size="23.5" fill="#2a2aff" textLength="58.5" lengthAdjust="spacingAndGlyphs" stroke="#ffffff" stroke-width="0.25">115.11</text>
<text x="644.5" y="1797.8" font-size="23.5" fill="#2a2aff" textLength="58.2" lengthAdjust="spacingAndGlyphs" stroke="#ffffff" stroke-width="0.25">116.11</text>
<text x="858.0" y="1566.6" font-size="23.5" fill="#2a2aff" textLength="59.9" lengthAdjust="spacingAndGlyphs" stroke="#ffffff" stroke-width="0.25">142.14</text>
<text x="865.7" y="1792.0" font-size="23.5" fill="#2a2aff" textLength="59.5" lengthAdjust="spacingAndGlyphs" stroke="#ffffff" stroke-width="0.25">143.15</text>
</svg></body></html>
